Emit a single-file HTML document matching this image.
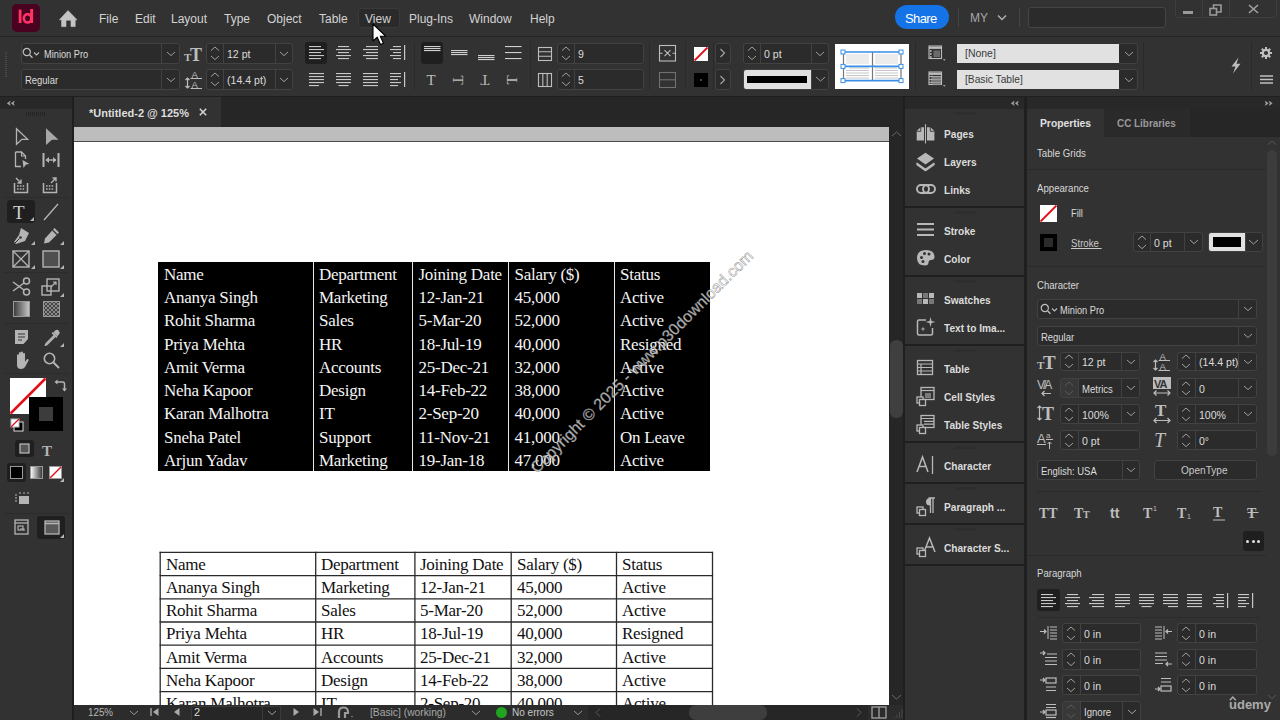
<!DOCTYPE html>
<html><head><meta charset="utf-8"><style>
html,body{margin:0;padding:0;width:1280px;height:720px;overflow:hidden;background:#323232}
.a{position:absolute;box-sizing:border-box}
svg.a{overflow:visible}
.t{position:absolute;white-space:nowrap;line-height:1;font-family:"Liberation Sans",sans-serif}
</style></head><body>
<div class="a" style="left:0px;top:0px;width:1280px;height:720px;background:#323232"></div>
<div class="a" style="left:0px;top:36px;width:1280px;height:1px;background:#262626"></div>
<div class="a" style="left:0px;top:96px;width:1280px;height:1px;background:#1f1f1f"></div>
<div class="a" style="left:12px;top:4px;width:28px;height:28px;background:#49021f;border-radius:5px"></div>
<svg class="a" style="left:12px;top:4px;" width="28" height="28" viewBox="0 0 28 28"><rect x="6.7" y="5.6" width="2.8" height="13.4" fill="#ff3366"/><rect x="18.2" y="5" width="2.9" height="14" fill="#ff3366"/><ellipse cx="15.6" cy="14.3" rx="3.8" ry="4.2" stroke="#ff3366" stroke-width="2.6" fill="none"/></svg>
<svg class="a" style="left:59px;top:10px;" width="19" height="18" viewBox="0 0 19 18"><path d="M9 0.6 L18 9.8 L16.2 9.8 L16.2 16.6 L12 16.6 L12 10.3 L7 10.3 L7 16.6 L2.6 16.6 L2.6 9.8 L0.4 9.8 Z" fill="#c4c4c4" stroke="#c4c4c4" stroke-width="0.6" stroke-linejoin="round"/></svg>
<div class="a" style="left:357.5px;top:8px;width:42.5px;height:20px;background:#2a2a2a;border:1px solid #3a3a3a;border-radius:3px;box-sizing:border-box"></div>
<div class="t" style="left:99px;top:12.84px;font-size:12px;color:#d2d2d2;font-weight:normal;font-family:'Liberation Sans', sans-serif;">File</div>
<div class="t" style="left:135px;top:12.84px;font-size:12px;color:#d2d2d2;font-weight:normal;font-family:'Liberation Sans', sans-serif;">Edit</div>
<div class="t" style="left:171px;top:12.84px;font-size:12px;color:#d2d2d2;font-weight:normal;font-family:'Liberation Sans', sans-serif;">Layout</div>
<div class="t" style="left:224px;top:12.84px;font-size:12px;color:#d2d2d2;font-weight:normal;font-family:'Liberation Sans', sans-serif;">Type</div>
<div class="t" style="left:267px;top:12.84px;font-size:12px;color:#d2d2d2;font-weight:normal;font-family:'Liberation Sans', sans-serif;">Object</div>
<div class="t" style="left:319px;top:12.84px;font-size:12px;color:#d2d2d2;font-weight:normal;font-family:'Liberation Sans', sans-serif;">Table</div>
<div class="t" style="left:365px;top:12.84px;font-size:12px;color:#d2d2d2;font-weight:normal;font-family:'Liberation Sans', sans-serif;">View</div>
<div class="t" style="left:409px;top:12.84px;font-size:12px;color:#d2d2d2;font-weight:normal;font-family:'Liberation Sans', sans-serif;">Plug-Ins</div>
<div class="t" style="left:469px;top:12.84px;font-size:12px;color:#d2d2d2;font-weight:normal;font-family:'Liberation Sans', sans-serif;">Window</div>
<div class="t" style="left:530px;top:12.84px;font-size:12px;color:#d2d2d2;font-weight:normal;font-family:'Liberation Sans', sans-serif;">Help</div>
<div class="a" style="left:895px;top:5px;width:54px;height:24px;background:#1473e6;border-radius:12px"></div>
<div class="t" style="left:905px;top:11.50px;font-size:13px;color:#ffffff;font-weight:normal;font-family:'Liberation Sans', sans-serif;letter-spacing:-0.6px">Share</div>
<div class="a" style="left:958px;top:8px;width:1px;height:19px;background:#444"></div>
<div class="t" style="left:970px;top:11.84px;font-size:12px;color:#a8a8a8;font-weight:normal;font-family:'Liberation Sans', sans-serif;">MY</div>
<svg class="a" style="left:997px;top:14px;" width="10" height="7" viewBox="0 0 10 7"><path d="M1 1.5 L5 5.5 L9 1.5" stroke="#b0b0b0" stroke-width="1.5" fill="none"/></svg>
<div class="a" style="left:1019px;top:8px;width:1px;height:19px;background:#444"></div>
<div class="a" style="left:1028px;top:7px;width:138px;height:21px;background:#2b2b2b;border:1px solid #454545;border-radius:3px;box-sizing:border-box"></div>
<div class="a" style="left:1175px;top:-3px;width:102px;height:21px;border:1px solid #3e3e3e;border-radius:3px;box-sizing:border-box"></div>
<div class="a" style="left:1202px;top:0px;width:1px;height:18px;background:#3e3e3e"></div>
<div class="a" style="left:1229px;top:0px;width:1px;height:18px;background:#3e3e3e"></div>
<div class="a" style="left:1183px;top:11px;width:10px;height:2.5px;background:#9a9a9a"></div>
<svg class="a" style="left:1209px;top:4px;" width="14" height="12" viewBox="0 0 14 12"><rect x="1" y="4.5" width="6.5" height="6.5" stroke="#9a9a9a" stroke-width="1.6" fill="none"/><path d="M4.5 4.5 V1 H12 V8 H7.5" stroke="#9a9a9a" stroke-width="1.6" fill="none"/></svg>
<svg class="a" style="left:1248px;top:4px;" width="11" height="10" viewBox="0 0 11 10"><path d="M1 1 L10 9 M10 1 L1 9" stroke="#a0a0a0" stroke-width="1.6"/></svg>
<div class="a" style="left:5px;top:52px;width:2px;height:1px;background:#4a4a4a"></div>
<div class="a" style="left:5px;top:54px;width:2px;height:1px;background:#4a4a4a"></div>
<div class="a" style="left:5px;top:56px;width:2px;height:1px;background:#4a4a4a"></div>
<div class="a" style="left:5px;top:58px;width:2px;height:1px;background:#4a4a4a"></div>
<div class="a" style="left:5px;top:60px;width:2px;height:1px;background:#4a4a4a"></div>
<div class="a" style="left:5px;top:62px;width:2px;height:1px;background:#4a4a4a"></div>
<div class="a" style="left:5px;top:64px;width:2px;height:1px;background:#4a4a4a"></div>
<div class="a" style="left:5px;top:66px;width:2px;height:1px;background:#4a4a4a"></div>
<div class="a" style="left:5px;top:68px;width:2px;height:1px;background:#4a4a4a"></div>
<div class="a" style="left:5px;top:70px;width:2px;height:1px;background:#4a4a4a"></div>
<div class="a" style="left:5px;top:72px;width:2px;height:1px;background:#4a4a4a"></div>
<div class="a" style="left:5px;top:74px;width:2px;height:1px;background:#4a4a4a"></div>
<div class="a" style="left:5px;top:76px;width:2px;height:1px;background:#4a4a4a"></div>
<div class="a" style="left:21px;top:43px;width:159px;height:21px;background:#2b2b2b;border:1px solid #424242;border-radius:3px;box-sizing:border-box"></div>
<div class="a" style="left:161px;top:44px;width:1px;height:19px;background:#424242"></div>
<svg class="a" style="left:165.5px;top:50.7px;" width="10" height="5.6" viewBox="0 0 10 5.6"><path d="M1 1 L5.0 4.6 L9 1" stroke="#a0a0a0" stroke-width="1.0" fill="none"/></svg>
<svg class="a" style="left:22px;top:47px;" width="24" height="14" viewBox="0 0 24 14"><circle cx="4.8" cy="5" r="3.6" stroke="#bdbdbd" stroke-width="1.2" fill="none"/><path d="M7.5 7.7 L10.5 10.8" stroke="#bdbdbd" stroke-width="1.3"/><path d="M12 5.5 L14.5 8 L17 5.5" stroke="#bdbdbd" stroke-width="1.1" fill="none"/></svg>
<div class="t" style="left:44px;top:48.69px;font-size:11px;color:#dcdcdc;font-weight:normal;font-family:'Liberation Sans', sans-serif;transform:scaleX(0.84);transform-origin:0 0;">Minion Pro</div>
<div class="a" style="left:21px;top:69px;width:159px;height:21px;background:#2b2b2b;border:1px solid #424242;border-radius:3px;box-sizing:border-box"></div>
<div class="a" style="left:161px;top:70px;width:1px;height:19px;background:#424242"></div>
<svg class="a" style="left:165.5px;top:76.7px;" width="10" height="5.6" viewBox="0 0 10 5.6"><path d="M1 1 L5.0 4.6 L9 1" stroke="#a0a0a0" stroke-width="1.0" fill="none"/></svg>
<div class="t" style="left:25px;top:75.49px;font-size:11px;color:#dcdcdc;font-weight:normal;font-family:'Liberation Sans', sans-serif;transform:scaleX(0.86);transform-origin:0 0;">Regular</div>
<svg class="a" style="left:184px;top:46px;" width="20" height="16" viewBox="0 0 20 16"><text x="0" y="15" font-family="Liberation Serif" font-weight="bold" font-size="11" fill="#bdbdbd">T</text><text x="6" y="15" font-family="Liberation Serif" font-weight="bold" font-size="18" fill="#bdbdbd">T</text></svg>
<div class="a" style="left:206px;top:43px;width:87px;height:21px;background:#2b2b2b;border:1px solid #424242;border-radius:3px;box-sizing:border-box"></div>
<div class="a" style="left:223px;top:44px;width:1px;height:19px;background:#424242"></div>
<svg class="a" style="left:209.5px;top:46.2px;" width="10" height="5.6" viewBox="0 0 10 5.6"><path d="M1 4.6 L5.0 1 L9 4.6" stroke="#a0a0a0" stroke-width="1.0" fill="none"/></svg>
<svg class="a" style="left:209.5px;top:55.2px;" width="10" height="5.6" viewBox="0 0 10 5.6"><path d="M1 1 L5.0 4.6 L9 1" stroke="#a0a0a0" stroke-width="1.0" fill="none"/></svg>
<div class="a" style="left:275px;top:44px;width:1px;height:19px;background:#424242"></div>
<svg class="a" style="left:279.0px;top:50.7px;" width="10" height="5.6" viewBox="0 0 10 5.6"><path d="M1 1 L5.0 4.6 L9 1" stroke="#a0a0a0" stroke-width="1.0" fill="none"/></svg>
<div class="t" style="left:227px;top:49.49px;font-size:11px;color:#dcdcdc;font-weight:normal;font-family:'Liberation Sans', sans-serif;transform:scaleX(0.96);transform-origin:0 0;">12 pt</div>
<svg class="a" style="left:185px;top:69px;" width="20" height="20" viewBox="0 0 20 20"><path d="M2.5 9 V19 M0.5 11 L2.5 9 L4.5 11 M0.5 17 L2.5 19 L4.5 17" stroke="#bdbdbd" stroke-width="1.2" fill="none"/><text x="6.5" y="9" font-family="Liberation Sans" font-size="9.5" fill="#bdbdbd">A</text><text x="6.5" y="19" font-family="Liberation Sans" font-size="9.5" fill="#bdbdbd">A</text><path d="M5.5 9.5 H17 M5.5 19.5 H17" stroke="#bdbdbd" stroke-width="1"/></svg>
<div class="a" style="left:206px;top:69px;width:87px;height:21px;background:#2b2b2b;border:1px solid #424242;border-radius:3px;box-sizing:border-box"></div>
<div class="a" style="left:223px;top:70px;width:1px;height:19px;background:#424242"></div>
<svg class="a" style="left:209.5px;top:72.2px;" width="10" height="5.6" viewBox="0 0 10 5.6"><path d="M1 4.6 L5.0 1 L9 4.6" stroke="#a0a0a0" stroke-width="1.0" fill="none"/></svg>
<svg class="a" style="left:209.5px;top:81.2px;" width="10" height="5.6" viewBox="0 0 10 5.6"><path d="M1 1 L5.0 4.6 L9 1" stroke="#a0a0a0" stroke-width="1.0" fill="none"/></svg>
<div class="a" style="left:275px;top:70px;width:1px;height:19px;background:#424242"></div>
<svg class="a" style="left:279.0px;top:76.7px;" width="10" height="5.6" viewBox="0 0 10 5.6"><path d="M1 1 L5.0 4.6 L9 1" stroke="#a0a0a0" stroke-width="1.0" fill="none"/></svg>
<div class="t" style="left:227px;top:75.49px;font-size:11px;color:#dcdcdc;font-weight:normal;font-family:'Liberation Sans', sans-serif;transform:scaleX(0.96);transform-origin:0 0;">(14.4 pt)</div>
<div class="a" style="left:305px;top:42px;width:22px;height:22px;background:#1f1f1f;border-radius:3px"></div>
<svg class="a" style="left:309px;top:46px;" width="16" height="15" viewBox="0 0 16 15"><g><rect x="0" y="0" width="12" height="1.1" fill="#c8c8c8"/><rect x="0" y="3" width="15" height="1.1" fill="#c8c8c8"/><rect x="0" y="6" width="12" height="1.1" fill="#c8c8c8"/><rect x="0" y="9" width="15" height="1.1" fill="#c8c8c8"/><rect x="0" y="12" width="12" height="1.1" fill="#c8c8c8"/></g></svg>
<svg class="a" style="left:336px;top:46px;" width="16" height="15" viewBox="0 0 16 15"><g><rect x="2" y="0" width="11" height="1.1" fill="#c8c8c8"/><rect x="0" y="3" width="15" height="1.1" fill="#c8c8c8"/><rect x="2" y="6" width="11" height="1.1" fill="#c8c8c8"/><rect x="0" y="9" width="15" height="1.1" fill="#c8c8c8"/><rect x="2" y="12" width="11" height="1.1" fill="#c8c8c8"/></g></svg>
<svg class="a" style="left:363px;top:46px;" width="16" height="15" viewBox="0 0 16 15"><g><rect x="3" y="0" width="12" height="1.1" fill="#c8c8c8"/><rect x="0" y="3" width="15" height="1.1" fill="#c8c8c8"/><rect x="3" y="6" width="12" height="1.1" fill="#c8c8c8"/><rect x="0" y="9" width="15" height="1.1" fill="#c8c8c8"/><rect x="3" y="12" width="12" height="1.1" fill="#c8c8c8"/></g></svg>
<svg class="a" style="left:390px;top:46px;" width="16" height="15" viewBox="0 0 16 15"><g><rect x="3" y="0" width="8" height="1.1" fill="#c8c8c8"/><rect x="0" y="3" width="11" height="1.1" fill="#c8c8c8"/><rect x="3" y="6" width="8" height="1.1" fill="#c8c8c8"/><rect x="0" y="9" width="11" height="1.1" fill="#c8c8c8"/><rect x="3" y="12" width="8" height="1.1" fill="#c8c8c8"/><rect x="14" y="-1" width="1.2" height="15" fill="#c8c8c8"/></g></svg>
<svg class="a" style="left:309px;top:73px;" width="16" height="15" viewBox="0 0 16 15"><g><rect x="0" y="0" width="15" height="1.1" fill="#c8c8c8"/><rect x="0" y="3" width="15" height="1.1" fill="#c8c8c8"/><rect x="0" y="6" width="15" height="1.1" fill="#c8c8c8"/><rect x="0" y="9" width="15" height="1.1" fill="#c8c8c8"/><rect x="0" y="12" width="10" height="1.1" fill="#c8c8c8"/></g></svg>
<svg class="a" style="left:336px;top:73px;" width="16" height="15" viewBox="0 0 16 15"><g><rect x="0" y="0" width="15" height="1.1" fill="#c8c8c8"/><rect x="0" y="3" width="15" height="1.1" fill="#c8c8c8"/><rect x="0" y="6" width="15" height="1.1" fill="#c8c8c8"/><rect x="0" y="9" width="15" height="1.1" fill="#c8c8c8"/><rect x="2.5" y="12" width="10.0" height="1.1" fill="#c8c8c8"/></g></svg>
<svg class="a" style="left:363px;top:73px;" width="16" height="15" viewBox="0 0 16 15"><g><rect x="0" y="0" width="15" height="1.1" fill="#c8c8c8"/><rect x="0" y="3" width="15" height="1.1" fill="#c8c8c8"/><rect x="0" y="6" width="15" height="1.1" fill="#c8c8c8"/><rect x="0" y="9" width="15" height="1.1" fill="#c8c8c8"/><rect x="0" y="12" width="15" height="1.1" fill="#c8c8c8"/></g></svg>
<svg class="a" style="left:390px;top:73px;" width="16" height="15" viewBox="0 0 16 15"><g><rect x="0" y="0" width="11" height="1.1" fill="#c8c8c8"/><rect x="0" y="3" width="11" height="1.1" fill="#c8c8c8"/><rect x="0" y="6" width="8" height="1.1" fill="#c8c8c8"/><rect x="0" y="9" width="11" height="1.1" fill="#c8c8c8"/><rect x="0" y="12" width="8" height="1.1" fill="#c8c8c8"/><rect x="14" y="-1" width="1.2" height="15" fill="#c8c8c8"/></g></svg>
<div class="a" style="left:414px;top:42px;width:1px;height:48px;background:#2a2a2a"></div>
<div class="a" style="left:421px;top:42px;width:22px;height:22px;background:#1f1f1f;border-radius:3px"></div>
<svg class="a" style="left:424px;top:46px;" width="17" height="6" viewBox="0 0 17 6"><rect x="0" y="0" width="16.5" height="1.1" fill="#d0d0d0"/><rect x="0" y="2" width="16.5" height="1.1" fill="#d0d0d0"/><rect x="0" y="4" width="16.5" height="1.1" fill="#d0d0d0"/></svg>
<svg class="a" style="left:451px;top:50px;" width="17" height="6" viewBox="0 0 17 6"><rect x="0" y="0" width="16.5" height="1.1" fill="#d0d0d0"/><rect x="0" y="2" width="16.5" height="1.1" fill="#d0d0d0"/><rect x="0" y="4" width="16.5" height="1.1" fill="#d0d0d0"/></svg>
<svg class="a" style="left:478px;top:55px;" width="17" height="6" viewBox="0 0 17 6"><rect x="0" y="0" width="16.5" height="1.1" fill="#d0d0d0"/><rect x="0" y="2" width="16.5" height="1.1" fill="#d0d0d0"/><rect x="0" y="4" width="16.5" height="1.1" fill="#d0d0d0"/></svg>
<svg class="a" style="left:505px;top:46px;" width="17" height="14" viewBox="0 0 17 14"><rect x="0" y="0" width="16.5" height="1.1" fill="#d0d0d0"/><rect x="0" y="6" width="16.5" height="1.1" fill="#d0d0d0"/><rect x="0" y="12" width="16.5" height="1.1" fill="#d0d0d0"/></svg>
<svg class="a" style="left:424px;top:73px;" width="14" height="14" viewBox="0 0 14 14"><text x="7" y="11.8" text-anchor="middle" font-family="Liberation Serif" font-size="15" fill="#bdbdbd">T</text></svg>
<svg class="a" style="left:451px;top:73px;" width="14" height="14" viewBox="0 0 14 14"><g transform="rotate(90 7 7)"><text x="7" y="11.8" text-anchor="middle" font-family="Liberation Serif" font-size="15" fill="#bdbdbd">T</text></g></svg>
<svg class="a" style="left:478px;top:73px;" width="14" height="14" viewBox="0 0 14 14"><g transform="rotate(180 7 7)"><text x="7" y="11.8" text-anchor="middle" font-family="Liberation Serif" font-size="15" fill="#bdbdbd">T</text></g></svg>
<svg class="a" style="left:505px;top:73px;" width="14" height="14" viewBox="0 0 14 14"><g transform="rotate(270 7 7)"><text x="7" y="11.8" text-anchor="middle" font-family="Liberation Serif" font-size="15" fill="#bdbdbd">T</text></g></svg>
<div class="a" style="left:530px;top:42px;width:1px;height:48px;background:#2a2a2a"></div>
<svg class="a" style="left:537px;top:46px;" width="16" height="15" viewBox="0 0 16 15"><rect x="1.5" y="1.5" width="13" height="13" stroke="#bdbdbd" stroke-width="1.1" fill="none"/><path d="M1.5 5.8 H14.5 M1.5 10.2 H14.5" stroke="#bdbdbd" stroke-width="1.1"/></svg>
<div class="a" style="left:557px;top:43px;width:87px;height:21px;background:#2b2b2b;border:1px solid #424242;border-radius:3px;box-sizing:border-box"></div>
<div class="a" style="left:574px;top:44px;width:1px;height:19px;background:#424242"></div>
<svg class="a" style="left:560.5px;top:46.2px;" width="10" height="5.6" viewBox="0 0 10 5.6"><path d="M1 4.6 L5.0 1 L9 4.6" stroke="#a0a0a0" stroke-width="1.0" fill="none"/></svg>
<svg class="a" style="left:560.5px;top:55.2px;" width="10" height="5.6" viewBox="0 0 10 5.6"><path d="M1 1 L5.0 4.6 L9 1" stroke="#a0a0a0" stroke-width="1.0" fill="none"/></svg>
<div class="t" style="left:578px;top:49.49px;font-size:11px;color:#dcdcdc;font-weight:normal;font-family:'Liberation Sans', sans-serif;transform:scaleX(0.96);transform-origin:0 0;">9</div>
<svg class="a" style="left:537px;top:72px;" width="16" height="15" viewBox="0 0 16 15"><rect x="1.5" y="1.5" width="13" height="13" stroke="#bdbdbd" stroke-width="1.1" fill="none"/><path d="M5.8 1.5 V14.5 M10.2 1.5 V14.5" stroke="#bdbdbd" stroke-width="1.1"/></svg>
<div class="a" style="left:557px;top:69px;width:87px;height:21px;background:#2b2b2b;border:1px solid #424242;border-radius:3px;box-sizing:border-box"></div>
<div class="a" style="left:574px;top:70px;width:1px;height:19px;background:#424242"></div>
<svg class="a" style="left:560.5px;top:72.2px;" width="10" height="5.6" viewBox="0 0 10 5.6"><path d="M1 4.6 L5.0 1 L9 4.6" stroke="#a0a0a0" stroke-width="1.0" fill="none"/></svg>
<svg class="a" style="left:560.5px;top:81.2px;" width="10" height="5.6" viewBox="0 0 10 5.6"><path d="M1 1 L5.0 4.6 L9 1" stroke="#a0a0a0" stroke-width="1.0" fill="none"/></svg>
<div class="t" style="left:578px;top:75.49px;font-size:11px;color:#dcdcdc;font-weight:normal;font-family:'Liberation Sans', sans-serif;transform:scaleX(0.96);transform-origin:0 0;">5</div>
<div class="a" style="left:649px;top:42px;width:1px;height:48px;background:#2a2a2a"></div>
<svg class="a" style="left:658px;top:44px;" width="18" height="18" viewBox="0 0 18 18"><rect x="1.5" y="1.5" width="16" height="15.5" stroke="#bdbdbd" stroke-width="1.1" fill="none"/><path d="M1.5 9.2 H4.5 M14.5 9.2 H17.5 M6.5 6.2 L12.5 12.2 M12.5 6.2 L6.5 12.2" stroke="#bdbdbd" stroke-width="1.1"/></svg>
<svg class="a" style="left:658px;top:71px;" width="18" height="18" viewBox="0 0 18 18"><rect x="1.5" y="1.5" width="16" height="15" stroke="#707070" stroke-width="1.1" fill="none"/><path d="M1.5 8.8 H17.5" stroke="#707070" stroke-width="1.1"/></svg>
<div class="a" style="left:685px;top:42px;width:1px;height:48px;background:#2a2a2a"></div>
<svg class="a" style="left:694px;top:46.5px;" width="14" height="14" viewBox="0 0 14 14"><rect width="14" height="14" fill="#ffffff"/><path d="M0.5 13.5 L13.5 0.5" stroke="#e0101a" stroke-width="1.8"/></svg>
<div class="a" style="left:694px;top:72.5px;width:14px;height:14px;background:#000"></div>
<div class="a" style="left:700px;top:78.5px;width:2px;height:2px;background:#444"></div>
<div class="a" style="left:712.5px;top:43px;width:1px;height:47px;background:#2a2a2a"></div>
<div class="a" style="left:715px;top:43px;width:16px;height:21px;background:#2b2b2b;border:1px solid #424242;border-radius:3px;box-sizing:border-box"></div>
<svg class="a" style="left:719px;top:48px;" width="8" height="10" viewBox="0 0 8 10"><path d="M1.5 1 L5.5 5 L1.5 9" stroke="#a8a8a8" stroke-width="1.1" fill="none"/></svg>
<div class="a" style="left:715px;top:69px;width:16px;height:21px;background:#2b2b2b;border:1px solid #424242;border-radius:3px;box-sizing:border-box"></div>
<svg class="a" style="left:719px;top:74.5px;" width="8" height="10" viewBox="0 0 8 10"><path d="M1.5 1 L5.5 5 L1.5 9" stroke="#a8a8a8" stroke-width="1.1" fill="none"/></svg>
<div class="a" style="left:743px;top:43px;width:86px;height:21px;background:#2b2b2b;border:1px solid #424242;border-radius:3px;box-sizing:border-box"></div>
<div class="a" style="left:760px;top:44px;width:1px;height:19px;background:#424242"></div>
<svg class="a" style="left:746.5px;top:46.2px;" width="10" height="5.6" viewBox="0 0 10 5.6"><path d="M1 4.6 L5.0 1 L9 4.6" stroke="#a0a0a0" stroke-width="1.0" fill="none"/></svg>
<svg class="a" style="left:746.5px;top:55.2px;" width="10" height="5.6" viewBox="0 0 10 5.6"><path d="M1 1 L5.0 4.6 L9 1" stroke="#a0a0a0" stroke-width="1.0" fill="none"/></svg>
<div class="a" style="left:811px;top:44px;width:1px;height:19px;background:#424242"></div>
<svg class="a" style="left:815.0px;top:50.7px;" width="10" height="5.6" viewBox="0 0 10 5.6"><path d="M1 1 L5.0 4.6 L9 1" stroke="#a0a0a0" stroke-width="1.0" fill="none"/></svg>
<div class="t" style="left:764px;top:49.49px;font-size:11px;color:#dcdcdc;font-weight:normal;font-family:'Liberation Sans', sans-serif;transform:scaleX(0.96);transform-origin:0 0;">0 pt</div>
<div class="a" style="left:743px;top:69px;width:86px;height:21px;background:#2b2b2b;border:1px solid #424242;border-radius:3px;box-sizing:border-box"></div>
<div class="a" style="left:744px;top:70px;width:67px;height:19px;background:#e1e1e1;border-radius:2px 0 0 2px"></div>
<div class="a" style="left:747px;top:76px;width:60px;height:7px;background:#000"></div>
<div class="a" style="left:811px;top:70px;width:1px;height:19px;background:#424242"></div>
<svg class="a" style="left:814.5px;top:76.475px;" width="11" height="6.05" viewBox="0 0 11 6.05"><path d="M1 1 L5.5 5.05 L10 1" stroke="#a0a0a0" stroke-width="1.0" fill="none"/></svg>
<div class="a" style="left:835px;top:44px;width:74px;height:45px;background:#ffffff"></div>
<svg class="a" style="left:835px;top:44px;" width="74" height="45" viewBox="0 0 74 45"><rect x="11" y="10" width="23" height="10" fill="#ececec"/><rect x="40" y="10" width="23" height="10" fill="#ececec"/>
<path d="M14 24 H34 M40 24 H62 M11 26.5 H34 M40 26.5 H63 M11 29 H34 M40 29 H63 M11 31.5 H34 M40 31.5 H63 M11 34 H34 M40 34 H63" stroke="#b8b8b8" stroke-width="0.8"/>
<path d="M8.5 8 V37 M37.5 8 V37 M66 8 V37" stroke="#777" stroke-width="1.2"/>
<path d="M8 8 H66 M8 22.4 H66 M8 36.6 H66" stroke="#3a8ee6" stroke-width="1.6"/>
<g fill="#ffffff" stroke="#3a8ee6" stroke-width="1"><rect x="6" y="6" width="4" height="4"/><rect x="64" y="6" width="4" height="4"/><rect x="6" y="20.4" width="4" height="4"/><rect x="64" y="20.4" width="4" height="4"/><rect x="6" y="34.6" width="4" height="4"/><rect x="64" y="34.6" width="4" height="4"/></g></svg>
<div class="a" style="left:915px;top:42px;width:1px;height:48px;background:#2a2a2a"></div>
<svg class="a" style="left:927.5px;top:45px;" width="19" height="17" viewBox="0 0 19 17"><rect x="1" y="1" width="12.5" height="12.5" stroke="#bdbdbd" stroke-width="1.1" fill="none"/><path d="M1 2.8 H13.5" stroke="#bdbdbd" stroke-width="2.2"/><circle cx="2.8" cy="6" r="0.9" fill="#bdbdbd"/><circle cx="2.8" cy="9" r="0.9" fill="#bdbdbd"/><circle cx="2.8" cy="12" r="0.9" fill="#bdbdbd"/><rect x="5.5" y="5.5" width="6.5" height="6.5" fill="#6a6a6a"/><path d="M15 14.2 L17.6 14.2 L16.3 15.8 Z" fill="#bdbdbd"/></svg>
<svg class="a" style="left:927.5px;top:71px;" width="19" height="17" viewBox="0 0 19 17"><rect x="1" y="1" width="12.5" height="12.5" stroke="#bdbdbd" stroke-width="1.1" fill="none"/><path d="M1 2.8 H13.5" stroke="#bdbdbd" stroke-width="2.2"/><path d="M1 5.6 H13.5 M1 8.6 H13.5 M1 11.4 H13.5 M4 4.5 V13.5" stroke="#bdbdbd" stroke-width="0.9"/><rect x="4.5" y="6" width="8.5" height="2.2" fill="#7a7a7a"/><rect x="4.5" y="9" width="8.5" height="2.2" fill="#7a7a7a"/><rect x="4.5" y="12" width="8.5" height="1.5" fill="#7a7a7a"/><path d="M15 14.2 L17.6 14.2 L16.3 15.8 Z" fill="#bdbdbd"/></svg>
<div class="a" style="left:1118px;top:43px;width:20px;height:21px;background:#2b2b2b;border:1px solid #424242;border-radius:3px;box-sizing:border-box"></div>
<div class="a" style="left:957px;top:44px;width:162px;height:19px;background:#e1e1e1"></div>
<svg class="a" style="left:1123.5px;top:50.7px;" width="10" height="5.6" viewBox="0 0 10 5.6"><path d="M1 1 L5.0 4.6 L9 1" stroke="#a0a0a0" stroke-width="1.0" fill="none"/></svg>
<div class="t" style="left:965px;top:48.19px;font-size:11px;color:#3a3a3a;font-weight:normal;font-family:'Liberation Sans', sans-serif;transform:scaleX(0.95);transform-origin:0 0;">[None]</div>
<div class="a" style="left:1118px;top:69px;width:20px;height:21px;background:#2b2b2b;border:1px solid #424242;border-radius:3px;box-sizing:border-box"></div>
<div class="a" style="left:957px;top:70px;width:162px;height:19px;background:#e1e1e1"></div>
<svg class="a" style="left:1123.5px;top:76.7px;" width="10" height="5.6" viewBox="0 0 10 5.6"><path d="M1 1 L5.0 4.6 L9 1" stroke="#a0a0a0" stroke-width="1.0" fill="none"/></svg>
<div class="t" style="left:965px;top:74.19px;font-size:11px;color:#3a3a3a;font-weight:normal;font-family:'Liberation Sans', sans-serif;transform:scaleX(0.93);transform-origin:0 0;">[Basic Table]</div>
<div class="a" style="left:1143px;top:42px;width:1px;height:48px;background:#2a2a2a"></div>
<svg class="a" style="left:1230px;top:57px;" width="12" height="17" viewBox="0 0 12 17"><path d="M8.5 0.5 L1.5 9.5 L5.5 9.5 L3 16.5 L10.5 6.8 L6.5 6.8 Z" fill="#bdbdbd"/></svg>
<div class="a" style="left:1251px;top:42px;width:1px;height:48px;background:#2a2a2a"></div>
<svg class="a" style="left:1260px;top:47px;" width="12" height="12" viewBox="0 0 12 12"><circle cx="6" cy="6" r="3.2" stroke="#c0c0c0" stroke-width="2.2" fill="none"/><g stroke="#c0c0c0" stroke-width="2"><path d="M6 0 V2.5 M6 9.5 V12 M0 6 H2.5 M9.5 6 H12 M1.8 1.8 L3.5 3.5 M8.5 8.5 L10.2 10.2 M1.8 10.2 L3.5 8.5 M8.5 3.5 L10.2 1.8"/></g></svg>
<svg class="a" style="left:1260px;top:75px;" width="13" height="9" viewBox="0 0 13 9"><path d="M0 1 H13 M0 4.5 H13 M0 8 H13" stroke="#c0c0c0" stroke-width="1.3"/></svg>
<div class="a" style="left:0px;top:97px;width:73px;height:12px;background:#282828"></div>
<svg class="a" style="left:6.5px;top:100.5px;" width="8" height="5" viewBox="0 0 8 5"><path d="M3.2 0.3 L0.3 2.3 L3.2 4.3 L2.4 2.3 Z M7.2 0.3 L4.3 2.3 L7.2 4.3 L6.4 2.3 Z" fill="#a8a8a8" stroke="#a8a8a8" stroke-width="0.6" stroke-linejoin="round"/></svg>
<div class="a" style="left:72px;top:97px;width:2px;height:623px;background:#1f1f1f"></div>
<div class="a" style="left:26px;top:112px;width:1px;height:4px;background:#262626"></div>
<div class="a" style="left:28px;top:112px;width:1px;height:4px;background:#262626"></div>
<div class="a" style="left:30px;top:112px;width:1px;height:4px;background:#262626"></div>
<div class="a" style="left:32px;top:112px;width:1px;height:4px;background:#262626"></div>
<div class="a" style="left:34px;top:112px;width:1px;height:4px;background:#262626"></div>
<div class="a" style="left:36px;top:112px;width:1px;height:4px;background:#262626"></div>
<div class="a" style="left:38px;top:112px;width:1px;height:4px;background:#262626"></div>
<div class="a" style="left:40px;top:112px;width:1px;height:4px;background:#262626"></div>
<div class="a" style="left:42px;top:112px;width:1px;height:4px;background:#262626"></div>
<div class="a" style="left:44px;top:112px;width:1px;height:4px;background:#262626"></div>
<svg class="a" style="left:15px;top:127px;" width="15" height="19" viewBox="0 0 15 19"><path d="M1.5 1.8 L12.6 12.3 L6.9 12.3 L1.5 17.3 Z" stroke="#b4b4b4" stroke-width="1.3" fill="none" stroke-linejoin="miter"/></svg>
<svg class="a" style="left:45px;top:127px;" width="15" height="19" viewBox="0 0 15 19"><path d="M1 1.2 L13.5 12.8 L7 12.8 L1 18 Z" fill="#a8a8a8"/></svg>
<svg class="a" style="left:14px;top:151px;" width="16" height="18" viewBox="0 0 16 18"><path d="M1.5 1 H7.5 L11.5 5 V8 M1.5 1 V15.5 H7" stroke="#b4b4b4" stroke-width="1.3" fill="none"/><path d="M7.5 1 V5 H11.5" stroke="#b4b4b4" stroke-width="1.1" fill="none"/><path d="M8.5 9 L15.5 13 L12 13.5 L9.5 17 Z" fill="#b4b4b4"/></svg>
<svg class="a" style="left:41px;top:152px;" width="20" height="16" viewBox="0 0 20 16"><path d="M2.5 1 V15 M17.5 1 V15" stroke="#b4b4b4" stroke-width="2"/><path d="M5 8 H15" stroke="#b4b4b4" stroke-width="1.4"/><path d="M4.5 8 L8 5 V11 Z M15.5 8 L12 5 V11 Z" fill="#b4b4b4"/></svg>
<svg class="a" style="left:13px;top:176px;" width="16" height="18" viewBox="0 0 16 18"><path d="M1.5 7 V16.5 H14.5 V7" stroke="#b4b4b4" stroke-width="1.5" fill="none"/><path d="M3 2 L8 7 M8 3.5 V7 H4.5" stroke="#b4b4b4" stroke-width="1.4" fill="none"/><path d="M4 10 H12 M4 13 H12" stroke="#b4b4b4" stroke-width="1.6" stroke-dasharray="1.6 1.2"/></svg>
<svg class="a" style="left:42px;top:176px;" width="17" height="18" viewBox="0 0 17 18"><path d="M1.5 7 V16.5 H14.5 V7" stroke="#b4b4b4" stroke-width="1.5" fill="none"/><path d="M9 7 L14 2 M10.5 2 H14 V5.5" stroke="#b4b4b4" stroke-width="1.4" fill="none"/><path d="M4 10 H12 M4 13 H12" stroke="#b4b4b4" stroke-width="1.6" stroke-dasharray="1.6 1.2"/></svg>
<div class="a" style="left:4px;top:197px;width:65px;height:1px;background:#2c2c2c"></div>
<div class="a" style="left:7px;top:200px;width:28px;height:23px;background:#1f1f1f;border-radius:3px"></div>
<svg class="a" style="left:13px;top:203px;" width="16" height="17" viewBox="0 0 16 17"><text x="0" y="15.5" font-family="Liberation Serif" font-size="19" fill="#d0d0d0">T</text></svg>
<svg class="a" style="left:30px;top:217px;" width="4" height="4" viewBox="0 0 4 4"><path d="M4 0 V4 H0 Z" fill="#b4b4b4"/></svg>
<svg class="a" style="left:43px;top:203px;" width="16" height="18" viewBox="0 0 16 18"><path d="M1 17 L15 1" stroke="#b4b4b4" stroke-width="1.4"/></svg>
<svg class="a" style="left:12px;top:226px;" width="20" height="20" viewBox="0 0 20 20"><path d="M9 2 L17 7 L13 15 L4 18 L2 16 L7 9 Z" fill="#b4b4b4"/><path d="M2 18 L7.5 12.5" stroke="#323232" stroke-width="1"/><circle cx="8.5" cy="11.5" r="1.3" fill="#323232"/></svg>
<svg class="a" style="left:31px;top:241px;" width="4" height="4" viewBox="0 0 4 4"><path d="M4 0 V4 H0 Z" fill="#b4b4b4"/></svg>
<svg class="a" style="left:42px;top:226px;" width="19" height="19" viewBox="0 0 19 19"><path d="M12.5 2 L17 6.5 L7 16.5 L2 17.5 L3 12.5 Z" fill="#b4b4b4"/><path d="M10.5 4 L15 8.5" stroke="#323232" stroke-width="1.2"/></svg>
<svg class="a" style="left:60px;top:241px;" width="4" height="4" viewBox="0 0 4 4"><path d="M4 0 V4 H0 Z" fill="#b4b4b4"/></svg>
<svg class="a" style="left:12px;top:250px;" width="18" height="18" viewBox="0 0 18 18"><rect x="1" y="1" width="16" height="16" stroke="#b4b4b4" stroke-width="1.4" fill="none"/><path d="M1 1 L17 17 M17 1 L1 17" stroke="#b4b4b4" stroke-width="1.3"/></svg>
<svg class="a" style="left:31px;top:265px;" width="4" height="4" viewBox="0 0 4 4"><path d="M4 0 V4 H0 Z" fill="#b4b4b4"/></svg>
<svg class="a" style="left:42px;top:250px;" width="18" height="18" viewBox="0 0 18 18"><rect x="1" y="1" width="16" height="16" stroke="#b4b4b4" stroke-width="1.4" fill="#4f4f4f"/></svg>
<svg class="a" style="left:60px;top:265px;" width="4" height="4" viewBox="0 0 4 4"><path d="M4 0 V4 H0 Z" fill="#b4b4b4"/></svg>
<div class="a" style="left:4px;top:272px;width:65px;height:1px;background:#2c2c2c"></div>
<svg class="a" style="left:12px;top:277px;" width="19" height="19" viewBox="0 0 19 19"><circle cx="14.5" cy="4" r="3" stroke="#b4b4b4" stroke-width="1.5" fill="none"/><circle cx="14.5" cy="15" r="3" stroke="#b4b4b4" stroke-width="1.5" fill="none"/><path d="M1 5 L12 13 M1 14 L12 6" stroke="#b4b4b4" stroke-width="1.5"/></svg>
<svg class="a" style="left:41px;top:277px;" width="21" height="20" viewBox="0 0 21 20"><rect x="1" y="9" width="9" height="9" stroke="#b4b4b4" stroke-width="1.4" fill="none"/><rect x="6" y="2" width="12" height="12" stroke="#b4b4b4" stroke-width="1.4" fill="none"/><path d="M10 10 L15 5 M12 5 H15 V8" stroke="#b4b4b4" stroke-width="1.2" fill="none"/></svg>
<svg class="a" style="left:60px;top:293px;" width="4" height="4" viewBox="0 0 4 4"><path d="M4 0 V4 H0 Z" fill="#b4b4b4"/></svg>
<svg class="a" style="left:13px;top:301px;" width="17" height="16" viewBox="0 0 17 16"><defs><linearGradient id="g1" x1="0" x2="1"><stop offset="0" stop-color="#3a3a3a"/><stop offset="1" stop-color="#c8c8c8"/></linearGradient></defs><rect x="0.5" y="0.5" width="16" height="15" fill="url(#g1)" stroke="#9a9a9a" stroke-width="1"/></svg>
<svg class="a" style="left:43px;top:301px;" width="17" height="16" viewBox="0 0 17 16"><defs><pattern id="chk" width="4" height="4" patternUnits="userSpaceOnUse"><rect width="2" height="2" fill="#8a8a8a"/><rect x="2" y="2" width="2" height="2" fill="#8a8a8a"/><rect x="2" width="2" height="2" fill="#444"/><rect y="2" width="2" height="2" fill="#444"/></pattern></defs><rect x="0.5" y="0.5" width="16" height="15" fill="url(#chk)" stroke="#9a9a9a" stroke-width="1"/></svg>
<div class="a" style="left:4px;top:323px;width:65px;height:1px;background:#2c2c2c"></div>
<svg class="a" style="left:14px;top:329px;" width="15" height="16" viewBox="0 0 15 16"><path d="M1 1 H14 V10 L9.5 15 H1 Z" fill="#b4b4b4"/><path d="M4 5 H11 M4 8 H11 M4 11 H8" stroke="#323232" stroke-width="1.2"/></svg>
<svg class="a" style="left:43px;top:329px;" width="18" height="18" viewBox="0 0 18 18"><path d="M12.2 1.6 Q14 0 15.8 1.8 Q17.6 3.6 16 5.4 L14.2 7.2 L10.4 3.4 Z" fill="#b4b4b4"/><path d="M9.2 3.6 L14 8.4" stroke="#b4b4b4" stroke-width="1.6"/><path d="M11.6 6 L3.6 14 Q2.6 15 2.2 16.4 Q3.6 16 4.6 15 L12.6 7" stroke="#b4b4b4" stroke-width="1.3" fill="none" stroke-linejoin="round"/></svg>
<svg class="a" style="left:60px;top:343px;" width="4" height="4" viewBox="0 0 4 4"><path d="M4 0 V4 H0 Z" fill="#b4b4b4"/></svg>
<svg class="a" style="left:12px;top:351px;" width="19" height="19" viewBox="0 0 19 19"><path d="M5 11 V4.5 Q5 3.3 6 3.3 Q7 3.3 7 4.5 V9 V2.3 Q7 1.1 8 1.1 Q9 1.1 9 2.3 V9 V1.6 Q9 0.5 10 0.5 Q11 0.5 11 1.6 V9 V3 Q11 1.9 12 1.9 Q13 1.9 13 3 V11 L14.6 8.6 Q15.4 7.6 16.3 8.2 Q17 8.8 16.4 9.8 L13 16 Q11.8 18 9 18 Q5 18 5 14 Z" fill="#b4b4b4"/></svg>
<svg class="a" style="left:43px;top:352px;" width="17" height="17" viewBox="0 0 17 17"><circle cx="6.5" cy="6.5" r="5.2" stroke="#b4b4b4" stroke-width="1.6" fill="none"/><path d="M10.5 10.5 L16 16" stroke="#b4b4b4" stroke-width="2"/></svg>
<div class="a" style="left:4px;top:373px;width:65px;height:1px;background:#2c2c2c"></div>
<svg class="a" style="left:10px;top:378px;" width="36" height="36" viewBox="0 0 36 36"><rect width="36" height="36" fill="#ffffff"/><path d="M0.5 35.5 L35.5 0.5" stroke="#e0101a" stroke-width="2.5"/></svg>
<div class="a" style="left:29px;top:397px;width:34px;height:34px;background:#000"></div>
<div class="a" style="left:39px;top:407px;width:14px;height:14px;background:#3c3c3c"></div>
<svg class="a" style="left:54px;top:379px;" width="13" height="13" viewBox="0 0 13 13"><path d="M2 3 H8.5 Q10.5 3 10.5 5 V11" stroke="#b4b4b4" stroke-width="1.5" fill="none"/><path d="M0.5 3 L3.5 0.5 V5.5 Z M10.5 12.5 L8 9.5 H13 Z" fill="#b4b4b4"/></svg>
<svg class="a" style="left:10px;top:418px;" width="14" height="14" viewBox="0 0 14 14"><rect x="4" y="4" width="9" height="9" fill="#000" stroke="#ddd" stroke-width="1"/><rect x="1" y="1" width="8" height="8" fill="#fff" stroke="#bbb" stroke-width="1"/><path d="M1 9 L9 1" stroke="#e0101a" stroke-width="1.3"/></svg>
<div class="a" style="left:15px;top:440px;width:19px;height:17px;background:#1f1f1f;border-radius:3px"></div>
<svg class="a" style="left:19px;top:443px;" width="11" height="11" viewBox="0 0 11 11"><rect x="1" y="1" width="9" height="9" stroke="#bdbdbd" stroke-width="1.2" fill="#555"/></svg>
<svg class="a" style="left:42px;top:443px;" width="13" height="14" viewBox="0 0 13 14"><text x="0" y="12.5" font-family="Liberation Serif" font-weight="bold" font-size="15" fill="#b4b4b4">T</text></svg>
<div class="a" style="left:7px;top:463px;width:19px;height:19px;background:#1f1f1f;border-radius:3px"></div>
<svg class="a" style="left:10px;top:466px;" width="13" height="13" viewBox="0 0 13 13"><rect x="0.5" y="0.5" width="12" height="12" fill="#000" stroke="#9a9a9a" stroke-width="1"/></svg>
<svg class="a" style="left:30px;top:466px;" width="13" height="13" viewBox="0 0 13 13"><defs><linearGradient id="g2" x1="0" x2="1"><stop offset="0" stop-color="#ffffff"/><stop offset="1" stop-color="#333"/></linearGradient></defs><rect x="0.5" y="0.5" width="12" height="12" fill="url(#g2)" stroke="#9a9a9a" stroke-width="1"/></svg>
<svg class="a" style="left:49px;top:466px;" width="13" height="13" viewBox="0 0 13 13"><rect x="0.5" y="0.5" width="12" height="12" fill="#fff" stroke="#9a9a9a" stroke-width="1"/><path d="M1 12 L12 1" stroke="#e0101a" stroke-width="1.4"/></svg>
<svg class="a" style="left:60px;top:478px;" width="4" height="4" viewBox="0 0 4 4"><path d="M4 0 V4 H0 Z" fill="#b4b4b4"/></svg>
<svg class="a" style="left:14px;top:491px;" width="16" height="16" viewBox="0 0 16 16"><path d="M1 4 H3 M1 7 H3 M1 10 H3 M5 2 H7 M9 2 H11 M13 2 H15" stroke="#b4b4b4" stroke-width="1.2"/><rect x="5" y="5" width="10" height="8" fill="#b4b4b4"/></svg>
<div class="a" style="left:4px;top:513px;width:65px;height:1px;background:#2c2c2c"></div>
<svg class="a" style="left:14px;top:519px;" width="15" height="16" viewBox="0 0 15 16"><rect x="1" y="1" width="13" height="14" stroke="#b4b4b4" stroke-width="1.3" fill="none"/><path d="M1 4 H14" stroke="#b4b4b4" stroke-width="1.3"/><rect x="4" y="7" width="5" height="4" stroke="#b4b4b4" stroke-width="1.1" fill="none"/><path d="M6 10 L10 10 L10 12" stroke="#b4b4b4" stroke-width="1.1" fill="none"/></svg>
<div class="a" style="left:37px;top:516px;width:28px;height:23px;background:#1f1f1f;border-radius:3px"></div>
<svg class="a" style="left:44px;top:520px;" width="16" height="15" viewBox="0 0 16 15"><rect x="1" y="1" width="14" height="13" stroke="#b4b4b4" stroke-width="1.3" fill="#585858"/><path d="M1 3.5 H15" stroke="#b4b4b4" stroke-width="1.6"/></svg>
<svg class="a" style="left:60px;top:534px;" width="4" height="4" viewBox="0 0 4 4"><path d="M4 0 V4 H0 Z" fill="#b4b4b4"/></svg>
<div class="a" style="left:74px;top:97px;width:830px;height:30px;background:#262626"></div>
<div class="a" style="left:74px;top:97px;width:147px;height:30px;background:#323232"></div>
<div class="t" style="left:89px;top:108.19px;font-size:11px;color:#dedede;font-weight:bold;font-family:'Liberation Sans', sans-serif;">*Untitled-2 @ 125%</div>
<svg class="a" style="left:199px;top:108px;" width="8" height="8" viewBox="0 0 8 8"><path d="M0.8 0.8 L7.2 7.2 M7.2 0.8 L0.8 7.2" stroke="#d8d8d8" stroke-width="1.5"/></svg>
<div class="a" style="left:74px;top:127px;width:815px;height:14px;background:#bdbdbd"></div>
<div class="a" style="left:74px;top:141px;width:815px;height:1px;background:#4a4a4a"></div>
<div class="a" style="left:74px;top:142px;width:815px;height:563px;background:#ffffff"></div>
<div class="a" style="left:889px;top:127px;width:15px;height:578px;background:#262626"></div>
<svg class="a" style="left:891.0px;top:130.975px;" width="11" height="6.05" viewBox="0 0 11 6.05"><path d="M1 5.05 L5.5 1 L10 5.05" stroke="#6a6a6a" stroke-width="1" fill="none"/></svg>
<div class="a" style="left:890px;top:340px;width:13px;height:78px;background:#3f3f3f;border-radius:6px"></div>
<svg class="a" style="left:891.0px;top:693.975px;" width="11" height="6.05" viewBox="0 0 11 6.05"><path d="M1 1 L5.5 5.05 L10 1" stroke="#6a6a6a" stroke-width="1" fill="none"/></svg>
<div class="a" style="left:903px;top:97px;width:2px;height:623px;background:#1f1f1f"></div>
<div class="a" style="left:158px;top:262px;width:552px;height:209px;background:#000"></div>
<div class="a" style="left:313px;top:262px;width:1.3px;height:209px;background:#e8e8e8"></div>
<div class="a" style="left:412px;top:262px;width:1.3px;height:209px;background:#e8e8e8"></div>
<div class="a" style="left:508px;top:262px;width:1.3px;height:209px;background:#e8e8e8"></div>
<div class="a" style="left:613.5px;top:262px;width:1.3px;height:209px;background:#e8e8e8"></div>
<div class="t" style="left:164px;top:265.76px;font-size:17px;color:#f4f4f4;font-weight:normal;font-family:'Liberation Serif', serif;letter-spacing:-0.25px">Name</div>
<div class="t" style="left:319px;top:265.76px;font-size:17px;color:#f4f4f4;font-weight:normal;font-family:'Liberation Serif', serif;letter-spacing:-0.25px">Department</div>
<div class="t" style="left:418.5px;top:265.76px;font-size:17px;color:#f4f4f4;font-weight:normal;font-family:'Liberation Serif', serif;letter-spacing:-0.25px">Joining Date</div>
<div class="t" style="left:514.5px;top:265.76px;font-size:17px;color:#f4f4f4;font-weight:normal;font-family:'Liberation Serif', serif;letter-spacing:-0.25px">Salary ($)</div>
<div class="t" style="left:620px;top:265.76px;font-size:17px;color:#f4f4f4;font-weight:normal;font-family:'Liberation Serif', serif;letter-spacing:-0.25px">Status</div>
<div class="t" style="left:164px;top:289.01px;font-size:17px;color:#f4f4f4;font-weight:normal;font-family:'Liberation Serif', serif;letter-spacing:-0.25px">Ananya Singh</div>
<div class="t" style="left:319px;top:289.01px;font-size:17px;color:#f4f4f4;font-weight:normal;font-family:'Liberation Serif', serif;letter-spacing:-0.25px">Marketing</div>
<div class="t" style="left:418.5px;top:289.01px;font-size:17px;color:#f4f4f4;font-weight:normal;font-family:'Liberation Serif', serif;letter-spacing:-0.25px">12-Jan-21</div>
<div class="t" style="left:514.5px;top:289.01px;font-size:17px;color:#f4f4f4;font-weight:normal;font-family:'Liberation Serif', serif;letter-spacing:-0.25px">45,000</div>
<div class="t" style="left:620px;top:289.01px;font-size:17px;color:#f4f4f4;font-weight:normal;font-family:'Liberation Serif', serif;letter-spacing:-0.25px">Active</div>
<div class="t" style="left:164px;top:312.26px;font-size:17px;color:#f4f4f4;font-weight:normal;font-family:'Liberation Serif', serif;letter-spacing:-0.25px">Rohit Sharma</div>
<div class="t" style="left:319px;top:312.26px;font-size:17px;color:#f4f4f4;font-weight:normal;font-family:'Liberation Serif', serif;letter-spacing:-0.25px">Sales</div>
<div class="t" style="left:418.5px;top:312.26px;font-size:17px;color:#f4f4f4;font-weight:normal;font-family:'Liberation Serif', serif;letter-spacing:-0.25px">5-Mar-20</div>
<div class="t" style="left:514.5px;top:312.26px;font-size:17px;color:#f4f4f4;font-weight:normal;font-family:'Liberation Serif', serif;letter-spacing:-0.25px">52,000</div>
<div class="t" style="left:620px;top:312.26px;font-size:17px;color:#f4f4f4;font-weight:normal;font-family:'Liberation Serif', serif;letter-spacing:-0.25px">Active</div>
<div class="t" style="left:164px;top:335.51px;font-size:17px;color:#f4f4f4;font-weight:normal;font-family:'Liberation Serif', serif;letter-spacing:-0.25px">Priya Mehta</div>
<div class="t" style="left:319px;top:335.51px;font-size:17px;color:#f4f4f4;font-weight:normal;font-family:'Liberation Serif', serif;letter-spacing:-0.25px">HR</div>
<div class="t" style="left:418.5px;top:335.51px;font-size:17px;color:#f4f4f4;font-weight:normal;font-family:'Liberation Serif', serif;letter-spacing:-0.25px">18-Jul-19</div>
<div class="t" style="left:514.5px;top:335.51px;font-size:17px;color:#f4f4f4;font-weight:normal;font-family:'Liberation Serif', serif;letter-spacing:-0.25px">40,000</div>
<div class="t" style="left:620px;top:335.51px;font-size:17px;color:#f4f4f4;font-weight:normal;font-family:'Liberation Serif', serif;letter-spacing:-0.25px">Resigned</div>
<div class="t" style="left:164px;top:358.76px;font-size:17px;color:#f4f4f4;font-weight:normal;font-family:'Liberation Serif', serif;letter-spacing:-0.25px">Amit Verma</div>
<div class="t" style="left:319px;top:358.76px;font-size:17px;color:#f4f4f4;font-weight:normal;font-family:'Liberation Serif', serif;letter-spacing:-0.25px">Accounts</div>
<div class="t" style="left:418.5px;top:358.76px;font-size:17px;color:#f4f4f4;font-weight:normal;font-family:'Liberation Serif', serif;letter-spacing:-0.25px">25-Dec-21</div>
<div class="t" style="left:514.5px;top:358.76px;font-size:17px;color:#f4f4f4;font-weight:normal;font-family:'Liberation Serif', serif;letter-spacing:-0.25px">32,000</div>
<div class="t" style="left:620px;top:358.76px;font-size:17px;color:#f4f4f4;font-weight:normal;font-family:'Liberation Serif', serif;letter-spacing:-0.25px">Active</div>
<div class="t" style="left:164px;top:382.01px;font-size:17px;color:#f4f4f4;font-weight:normal;font-family:'Liberation Serif', serif;letter-spacing:-0.25px">Neha Kapoor</div>
<div class="t" style="left:319px;top:382.01px;font-size:17px;color:#f4f4f4;font-weight:normal;font-family:'Liberation Serif', serif;letter-spacing:-0.25px">Design</div>
<div class="t" style="left:418.5px;top:382.01px;font-size:17px;color:#f4f4f4;font-weight:normal;font-family:'Liberation Serif', serif;letter-spacing:-0.25px">14-Feb-22</div>
<div class="t" style="left:514.5px;top:382.01px;font-size:17px;color:#f4f4f4;font-weight:normal;font-family:'Liberation Serif', serif;letter-spacing:-0.25px">38,000</div>
<div class="t" style="left:620px;top:382.01px;font-size:17px;color:#f4f4f4;font-weight:normal;font-family:'Liberation Serif', serif;letter-spacing:-0.25px">Active</div>
<div class="t" style="left:164px;top:405.26px;font-size:17px;color:#f4f4f4;font-weight:normal;font-family:'Liberation Serif', serif;letter-spacing:-0.25px">Karan Malhotra</div>
<div class="t" style="left:319px;top:405.26px;font-size:17px;color:#f4f4f4;font-weight:normal;font-family:'Liberation Serif', serif;letter-spacing:-0.25px">IT</div>
<div class="t" style="left:418.5px;top:405.26px;font-size:17px;color:#f4f4f4;font-weight:normal;font-family:'Liberation Serif', serif;letter-spacing:-0.25px">2-Sep-20</div>
<div class="t" style="left:514.5px;top:405.26px;font-size:17px;color:#f4f4f4;font-weight:normal;font-family:'Liberation Serif', serif;letter-spacing:-0.25px">40,000</div>
<div class="t" style="left:620px;top:405.26px;font-size:17px;color:#f4f4f4;font-weight:normal;font-family:'Liberation Serif', serif;letter-spacing:-0.25px">Active</div>
<div class="t" style="left:164px;top:428.51px;font-size:17px;color:#f4f4f4;font-weight:normal;font-family:'Liberation Serif', serif;letter-spacing:-0.25px">Sneha Patel</div>
<div class="t" style="left:319px;top:428.51px;font-size:17px;color:#f4f4f4;font-weight:normal;font-family:'Liberation Serif', serif;letter-spacing:-0.25px">Support</div>
<div class="t" style="left:418.5px;top:428.51px;font-size:17px;color:#f4f4f4;font-weight:normal;font-family:'Liberation Serif', serif;letter-spacing:-0.25px">11-Nov-21</div>
<div class="t" style="left:514.5px;top:428.51px;font-size:17px;color:#f4f4f4;font-weight:normal;font-family:'Liberation Serif', serif;letter-spacing:-0.25px">41,000</div>
<div class="t" style="left:620px;top:428.51px;font-size:17px;color:#f4f4f4;font-weight:normal;font-family:'Liberation Serif', serif;letter-spacing:-0.25px">On Leave</div>
<div class="t" style="left:164px;top:451.76px;font-size:17px;color:#f4f4f4;font-weight:normal;font-family:'Liberation Serif', serif;letter-spacing:-0.25px">Arjun Yadav</div>
<div class="t" style="left:319px;top:451.76px;font-size:17px;color:#f4f4f4;font-weight:normal;font-family:'Liberation Serif', serif;letter-spacing:-0.25px">Marketing</div>
<div class="t" style="left:418.5px;top:451.76px;font-size:17px;color:#f4f4f4;font-weight:normal;font-family:'Liberation Serif', serif;letter-spacing:-0.25px">19-Jan-18</div>
<div class="t" style="left:514.5px;top:451.76px;font-size:17px;color:#f4f4f4;font-weight:normal;font-family:'Liberation Serif', serif;letter-spacing:-0.25px">47,000</div>
<div class="t" style="left:620px;top:451.76px;font-size:17px;color:#f4f4f4;font-weight:normal;font-family:'Liberation Serif', serif;letter-spacing:-0.25px">Active</div>
<div class="a" style="left:74px;top:142px;width:815px;height:563px;overflow:hidden">
<svg class="a" style="left:0;top:0" width="815" height="563" viewBox="0 0 815 563"><path d="M85.60 410.40 H639.10" stroke="#2a2a2a" stroke-width="1.3"/><path d="M85.60 433.60 H639.10" stroke="#2a2a2a" stroke-width="1.3"/><path d="M85.60 456.80 H639.10" stroke="#2a2a2a" stroke-width="1.3"/><path d="M85.60 480.00 H639.10" stroke="#2a2a2a" stroke-width="1.3"/><path d="M85.60 503.20 H639.10" stroke="#2a2a2a" stroke-width="1.3"/><path d="M85.60 526.40 H639.10" stroke="#2a2a2a" stroke-width="1.3"/><path d="M85.60 549.60 H639.10" stroke="#2a2a2a" stroke-width="1.3"/><path d="M85.60 572.80 H639.10" stroke="#2a2a2a" stroke-width="1.3"/><path d="M86.20 409.80 V563" stroke="#2a2a2a" stroke-width="1.3"/><path d="M241.70 409.80 V563" stroke="#2a2a2a" stroke-width="1.3"/><path d="M340.90 409.80 V563" stroke="#2a2a2a" stroke-width="1.3"/><path d="M437.20 409.80 V563" stroke="#2a2a2a" stroke-width="1.3"/><path d="M542.50 409.80 V563" stroke="#2a2a2a" stroke-width="1.3"/><path d="M638.50 409.80 V563" stroke="#2a2a2a" stroke-width="1.3"/></svg>
<div class="t" style="left:92px;top:413.76px;font-size:17px;color:#111;font-family:'Liberation Serif', serif;letter-spacing:-0.25px">Name</div>
<div class="t" style="left:247px;top:413.76px;font-size:17px;color:#111;font-family:'Liberation Serif', serif;letter-spacing:-0.25px">Department</div>
<div class="t" style="left:346px;top:413.76px;font-size:17px;color:#111;font-family:'Liberation Serif', serif;letter-spacing:-0.25px">Joining Date</div>
<div class="t" style="left:443px;top:413.76px;font-size:17px;color:#111;font-family:'Liberation Serif', serif;letter-spacing:-0.25px">Salary ($)</div>
<div class="t" style="left:548px;top:413.76px;font-size:17px;color:#111;font-family:'Liberation Serif', serif;letter-spacing:-0.25px">Status</div>
<div class="t" style="left:92px;top:436.96px;font-size:17px;color:#111;font-family:'Liberation Serif', serif;letter-spacing:-0.25px">Ananya Singh</div>
<div class="t" style="left:247px;top:436.96px;font-size:17px;color:#111;font-family:'Liberation Serif', serif;letter-spacing:-0.25px">Marketing</div>
<div class="t" style="left:346px;top:436.96px;font-size:17px;color:#111;font-family:'Liberation Serif', serif;letter-spacing:-0.25px">12-Jan-21</div>
<div class="t" style="left:443px;top:436.96px;font-size:17px;color:#111;font-family:'Liberation Serif', serif;letter-spacing:-0.25px">45,000</div>
<div class="t" style="left:548px;top:436.96px;font-size:17px;color:#111;font-family:'Liberation Serif', serif;letter-spacing:-0.25px">Active</div>
<div class="t" style="left:92px;top:460.16px;font-size:17px;color:#111;font-family:'Liberation Serif', serif;letter-spacing:-0.25px">Rohit Sharma</div>
<div class="t" style="left:247px;top:460.16px;font-size:17px;color:#111;font-family:'Liberation Serif', serif;letter-spacing:-0.25px">Sales</div>
<div class="t" style="left:346px;top:460.16px;font-size:17px;color:#111;font-family:'Liberation Serif', serif;letter-spacing:-0.25px">5-Mar-20</div>
<div class="t" style="left:443px;top:460.16px;font-size:17px;color:#111;font-family:'Liberation Serif', serif;letter-spacing:-0.25px">52,000</div>
<div class="t" style="left:548px;top:460.16px;font-size:17px;color:#111;font-family:'Liberation Serif', serif;letter-spacing:-0.25px">Active</div>
<div class="t" style="left:92px;top:483.36px;font-size:17px;color:#111;font-family:'Liberation Serif', serif;letter-spacing:-0.25px">Priya Mehta</div>
<div class="t" style="left:247px;top:483.36px;font-size:17px;color:#111;font-family:'Liberation Serif', serif;letter-spacing:-0.25px">HR</div>
<div class="t" style="left:346px;top:483.36px;font-size:17px;color:#111;font-family:'Liberation Serif', serif;letter-spacing:-0.25px">18-Jul-19</div>
<div class="t" style="left:443px;top:483.36px;font-size:17px;color:#111;font-family:'Liberation Serif', serif;letter-spacing:-0.25px">40,000</div>
<div class="t" style="left:548px;top:483.36px;font-size:17px;color:#111;font-family:'Liberation Serif', serif;letter-spacing:-0.25px">Resigned</div>
<div class="t" style="left:92px;top:506.56px;font-size:17px;color:#111;font-family:'Liberation Serif', serif;letter-spacing:-0.25px">Amit Verma</div>
<div class="t" style="left:247px;top:506.56px;font-size:17px;color:#111;font-family:'Liberation Serif', serif;letter-spacing:-0.25px">Accounts</div>
<div class="t" style="left:346px;top:506.56px;font-size:17px;color:#111;font-family:'Liberation Serif', serif;letter-spacing:-0.25px">25-Dec-21</div>
<div class="t" style="left:443px;top:506.56px;font-size:17px;color:#111;font-family:'Liberation Serif', serif;letter-spacing:-0.25px">32,000</div>
<div class="t" style="left:548px;top:506.56px;font-size:17px;color:#111;font-family:'Liberation Serif', serif;letter-spacing:-0.25px">Active</div>
<div class="t" style="left:92px;top:529.76px;font-size:17px;color:#111;font-family:'Liberation Serif', serif;letter-spacing:-0.25px">Neha Kapoor</div>
<div class="t" style="left:247px;top:529.76px;font-size:17px;color:#111;font-family:'Liberation Serif', serif;letter-spacing:-0.25px">Design</div>
<div class="t" style="left:346px;top:529.76px;font-size:17px;color:#111;font-family:'Liberation Serif', serif;letter-spacing:-0.25px">14-Feb-22</div>
<div class="t" style="left:443px;top:529.76px;font-size:17px;color:#111;font-family:'Liberation Serif', serif;letter-spacing:-0.25px">38,000</div>
<div class="t" style="left:548px;top:529.76px;font-size:17px;color:#111;font-family:'Liberation Serif', serif;letter-spacing:-0.25px">Active</div>
<div class="t" style="left:92px;top:552.96px;font-size:17px;color:#111;font-family:'Liberation Serif', serif;letter-spacing:-0.25px">Karan Malhotra</div>
<div class="t" style="left:247px;top:552.96px;font-size:17px;color:#111;font-family:'Liberation Serif', serif;letter-spacing:-0.25px">IT</div>
<div class="t" style="left:346px;top:552.96px;font-size:17px;color:#111;font-family:'Liberation Serif', serif;letter-spacing:-0.25px">2-Sep-20</div>
<div class="t" style="left:443px;top:552.96px;font-size:17px;color:#111;font-family:'Liberation Serif', serif;letter-spacing:-0.25px">40,000</div>
<div class="t" style="left:548px;top:552.96px;font-size:17px;color:#111;font-family:'Liberation Serif', serif;letter-spacing:-0.25px">Active</div>
</div>
<div class="t" style="left:641.5px;top:361.5px;font-size:16px;font-family:'Liberation Sans',sans-serif;color:rgba(255,255,255,0.75);-webkit-text-stroke:0.5px rgba(120,120,120,0.8);transform:translate(-50%,-50%) rotate(-45deg);transform-origin:center">Copyright &copy; 2025 - www.p30download.com</div>
<div class="a" style="left:74px;top:705px;width:829px;height:15px;background:#2c2c2c"></div>
<div class="t" style="left:88px;top:706.99px;font-size:11px;color:#b8b8b8;font-weight:normal;font-family:'Liberation Sans', sans-serif;transform:scaleX(0.89);transform-origin:0 0;">125%</div>
<svg class="a" style="left:129.0px;top:709.7px;" width="10" height="5.6" viewBox="0 0 10 5.6"><path d="M1 1 L5.0 4.6 L9 1" stroke="#9a9a9a" stroke-width="1" fill="none"/></svg>
<svg class="a" style="left:150px;top:707px;" width="9" height="10" viewBox="0 0 9 10"><path d="M1 1 V9" stroke="#aaa" stroke-width="1.4"/><path d="M8.5 1 L3 5 L8.5 9 Z" fill="#aaa"/></svg>
<svg class="a" style="left:173px;top:707px;" width="7" height="10" viewBox="0 0 7 10"><path d="M6.5 1 L1 5 L6.5 9 Z" fill="#aaa"/></svg>
<div class="a" style="left:190.5px;top:706px;width:90px;height:15px;background:#262626;border:1px solid #3a3a3a;border-radius:2px"></div>
<div class="a" style="left:262px;top:706px;width:1px;height:14px;background:#3a3a3a"></div>
<div class="t" style="left:194px;top:706.69px;font-size:11px;color:#d8d8d8;font-weight:normal;font-family:'Liberation Sans', sans-serif;">2</div>
<svg class="a" style="left:266.5px;top:709.7px;" width="10" height="5.6" viewBox="0 0 10 5.6"><path d="M1 1 L5.0 4.6 L9 1" stroke="#9a9a9a" stroke-width="1" fill="none"/></svg>
<div class="a" style="left:280px;top:706px;width:1px;height:14px;background:#3a3a3a"></div>
<svg class="a" style="left:293px;top:707px;" width="7" height="10" viewBox="0 0 7 10"><path d="M0.5 1 L6 5 L0.5 9 Z" fill="#aaa"/></svg>
<svg class="a" style="left:313px;top:707px;" width="9" height="10" viewBox="0 0 9 10"><path d="M8 1 V9" stroke="#aaa" stroke-width="1.4"/><path d="M0.5 1 L6 5 L0.5 9 Z" fill="#aaa"/></svg>
<svg class="a" style="left:337px;top:706px;" width="17" height="13" viewBox="0 0 17 13"><path d="M2 12 V6 Q2 1.5 6.5 1.5 Q11 1.5 11 6 V7 H8 V12" stroke="#9a9a9a" stroke-width="2.2" fill="none"/><path d="M14 10 L16 10 L15 11.5 Z" fill="#9a9a9a"/></svg>
<div class="t" style="left:370px;top:706.99px;font-size:11px;color:#a8a8a8;font-weight:normal;font-family:'Liberation Sans', sans-serif;transform:scaleX(0.935);transform-origin:0 0;">[Basic] (working)</div>
<svg class="a" style="left:471.0px;top:709.7px;" width="10" height="5.6" viewBox="0 0 10 5.6"><path d="M1 1 L5.0 4.6 L9 1" stroke="#9a9a9a" stroke-width="1" fill="none"/></svg>
<div class="a" style="left:496px;top:707px;width:11px;height:11px;background:#1fa51f;border-radius:50%"></div>
<div class="t" style="left:512px;top:706.99px;font-size:11px;color:#c8c8c8;font-weight:normal;font-family:'Liberation Sans', sans-serif;transform:scaleX(0.91);transform-origin:0 0;">No errors</div>
<svg class="a" style="left:573.0px;top:709.7px;" width="10" height="5.6" viewBox="0 0 10 5.6"><path d="M1 1 L5.0 4.6 L9 1" stroke="#9a9a9a" stroke-width="1" fill="none"/></svg>
<div class="a" style="left:588px;top:705px;width:280px;height:15px;background:#262626"></div>
<svg class="a" style="left:595px;top:708px;" width="6" height="9" viewBox="0 0 6 9"><path d="M5 0.5 L1 4.5 L5 8.5" stroke="#5a5a5a" stroke-width="1" fill="none"/></svg>
<div class="a" style="left:689px;top:705px;width:78px;height:15px;background:#3e3e3e;border-radius:7px"></div>
<svg class="a" style="left:856px;top:708px;" width="6" height="9" viewBox="0 0 6 9"><path d="M1 0.5 L5 4.5 L1 8.5" stroke="#5a5a5a" stroke-width="1" fill="none"/></svg>
<svg class="a" style="left:871px;top:706px;" width="16" height="13" viewBox="0 0 16 13"><rect x="1" y="1" width="14" height="11" stroke="#9a9a9a" stroke-width="1.4" fill="none"/><path d="M8 1 V12" stroke="#9a9a9a" stroke-width="1.4"/></svg>
<svg class="a" style="left:892px;top:708px;" width="11" height="11" viewBox="0 0 11 11"><path d="M10 1 V10 M7.5 4 V10 M5 6.5 V10 M2.5 9 V10" stroke="#4a4a4a" stroke-width="1"/></svg>
<div class="a" style="left:905px;top:97px;width:122px;height:12px;background:#282828"></div>
<svg class="a" style="left:1011px;top:100.5px;" width="8" height="5" viewBox="0 0 8 5"><path d="M3.2 0.3 L0.3 2.3 L3.2 4.3 L2.4 2.3 Z M7.2 0.3 L4.3 2.3 L7.2 4.3 L6.4 2.3 Z" fill="#a8a8a8" stroke="#a8a8a8" stroke-width="0.6" stroke-linejoin="round"/></svg>
<div class="a" style="left:1024px;top:97px;width:3px;height:623px;background:#1f1f1f"></div>
<div class="a" style="left:905px;top:206px;width:119px;height:2px;background:#1f1f1f"></div>
<div class="a" style="left:905px;top:275px;width:119px;height:2px;background:#1f1f1f"></div>
<div class="a" style="left:905px;top:344px;width:119px;height:2px;background:#1f1f1f"></div>
<div class="a" style="left:905px;top:441px;width:119px;height:2px;background:#1f1f1f"></div>
<div class="a" style="left:905px;top:482px;width:119px;height:2px;background:#1f1f1f"></div>
<div class="a" style="left:905px;top:523px;width:119px;height:2px;background:#1f1f1f"></div>
<div class="a" style="left:905px;top:564px;width:119px;height:2px;background:#1f1f1f"></div>
<div class="a" style="left:955px;top:112px;width:1px;height:3px;background:#2a2a2a"></div>
<div class="a" style="left:957px;top:112px;width:1px;height:3px;background:#2a2a2a"></div>
<div class="a" style="left:959px;top:112px;width:1px;height:3px;background:#2a2a2a"></div>
<div class="a" style="left:961px;top:112px;width:1px;height:3px;background:#2a2a2a"></div>
<div class="a" style="left:963px;top:112px;width:1px;height:3px;background:#2a2a2a"></div>
<div class="a" style="left:965px;top:112px;width:1px;height:3px;background:#2a2a2a"></div>
<div class="a" style="left:967px;top:112px;width:1px;height:3px;background:#2a2a2a"></div>
<div class="a" style="left:969px;top:112px;width:1px;height:3px;background:#2a2a2a"></div>
<div class="a" style="left:971px;top:112px;width:1px;height:3px;background:#2a2a2a"></div>
<div class="a" style="left:973px;top:112px;width:1px;height:3px;background:#2a2a2a"></div>
<div class="a" style="left:975px;top:112px;width:1px;height:3px;background:#2a2a2a"></div>
<div class="a" style="left:955px;top:211px;width:1px;height:3px;background:#2a2a2a"></div>
<div class="a" style="left:957px;top:211px;width:1px;height:3px;background:#2a2a2a"></div>
<div class="a" style="left:959px;top:211px;width:1px;height:3px;background:#2a2a2a"></div>
<div class="a" style="left:961px;top:211px;width:1px;height:3px;background:#2a2a2a"></div>
<div class="a" style="left:963px;top:211px;width:1px;height:3px;background:#2a2a2a"></div>
<div class="a" style="left:965px;top:211px;width:1px;height:3px;background:#2a2a2a"></div>
<div class="a" style="left:967px;top:211px;width:1px;height:3px;background:#2a2a2a"></div>
<div class="a" style="left:969px;top:211px;width:1px;height:3px;background:#2a2a2a"></div>
<div class="a" style="left:971px;top:211px;width:1px;height:3px;background:#2a2a2a"></div>
<div class="a" style="left:973px;top:211px;width:1px;height:3px;background:#2a2a2a"></div>
<div class="a" style="left:975px;top:211px;width:1px;height:3px;background:#2a2a2a"></div>
<div class="a" style="left:955px;top:280px;width:1px;height:3px;background:#2a2a2a"></div>
<div class="a" style="left:957px;top:280px;width:1px;height:3px;background:#2a2a2a"></div>
<div class="a" style="left:959px;top:280px;width:1px;height:3px;background:#2a2a2a"></div>
<div class="a" style="left:961px;top:280px;width:1px;height:3px;background:#2a2a2a"></div>
<div class="a" style="left:963px;top:280px;width:1px;height:3px;background:#2a2a2a"></div>
<div class="a" style="left:965px;top:280px;width:1px;height:3px;background:#2a2a2a"></div>
<div class="a" style="left:967px;top:280px;width:1px;height:3px;background:#2a2a2a"></div>
<div class="a" style="left:969px;top:280px;width:1px;height:3px;background:#2a2a2a"></div>
<div class="a" style="left:971px;top:280px;width:1px;height:3px;background:#2a2a2a"></div>
<div class="a" style="left:973px;top:280px;width:1px;height:3px;background:#2a2a2a"></div>
<div class="a" style="left:975px;top:280px;width:1px;height:3px;background:#2a2a2a"></div>
<div class="a" style="left:955px;top:349px;width:1px;height:3px;background:#2a2a2a"></div>
<div class="a" style="left:957px;top:349px;width:1px;height:3px;background:#2a2a2a"></div>
<div class="a" style="left:959px;top:349px;width:1px;height:3px;background:#2a2a2a"></div>
<div class="a" style="left:961px;top:349px;width:1px;height:3px;background:#2a2a2a"></div>
<div class="a" style="left:963px;top:349px;width:1px;height:3px;background:#2a2a2a"></div>
<div class="a" style="left:965px;top:349px;width:1px;height:3px;background:#2a2a2a"></div>
<div class="a" style="left:967px;top:349px;width:1px;height:3px;background:#2a2a2a"></div>
<div class="a" style="left:969px;top:349px;width:1px;height:3px;background:#2a2a2a"></div>
<div class="a" style="left:971px;top:349px;width:1px;height:3px;background:#2a2a2a"></div>
<div class="a" style="left:973px;top:349px;width:1px;height:3px;background:#2a2a2a"></div>
<div class="a" style="left:975px;top:349px;width:1px;height:3px;background:#2a2a2a"></div>
<div class="a" style="left:955px;top:446px;width:1px;height:3px;background:#2a2a2a"></div>
<div class="a" style="left:957px;top:446px;width:1px;height:3px;background:#2a2a2a"></div>
<div class="a" style="left:959px;top:446px;width:1px;height:3px;background:#2a2a2a"></div>
<div class="a" style="left:961px;top:446px;width:1px;height:3px;background:#2a2a2a"></div>
<div class="a" style="left:963px;top:446px;width:1px;height:3px;background:#2a2a2a"></div>
<div class="a" style="left:965px;top:446px;width:1px;height:3px;background:#2a2a2a"></div>
<div class="a" style="left:967px;top:446px;width:1px;height:3px;background:#2a2a2a"></div>
<div class="a" style="left:969px;top:446px;width:1px;height:3px;background:#2a2a2a"></div>
<div class="a" style="left:971px;top:446px;width:1px;height:3px;background:#2a2a2a"></div>
<div class="a" style="left:973px;top:446px;width:1px;height:3px;background:#2a2a2a"></div>
<div class="a" style="left:975px;top:446px;width:1px;height:3px;background:#2a2a2a"></div>
<div class="a" style="left:955px;top:487px;width:1px;height:3px;background:#2a2a2a"></div>
<div class="a" style="left:957px;top:487px;width:1px;height:3px;background:#2a2a2a"></div>
<div class="a" style="left:959px;top:487px;width:1px;height:3px;background:#2a2a2a"></div>
<div class="a" style="left:961px;top:487px;width:1px;height:3px;background:#2a2a2a"></div>
<div class="a" style="left:963px;top:487px;width:1px;height:3px;background:#2a2a2a"></div>
<div class="a" style="left:965px;top:487px;width:1px;height:3px;background:#2a2a2a"></div>
<div class="a" style="left:967px;top:487px;width:1px;height:3px;background:#2a2a2a"></div>
<div class="a" style="left:969px;top:487px;width:1px;height:3px;background:#2a2a2a"></div>
<div class="a" style="left:971px;top:487px;width:1px;height:3px;background:#2a2a2a"></div>
<div class="a" style="left:973px;top:487px;width:1px;height:3px;background:#2a2a2a"></div>
<div class="a" style="left:975px;top:487px;width:1px;height:3px;background:#2a2a2a"></div>
<div class="a" style="left:955px;top:528px;width:1px;height:3px;background:#2a2a2a"></div>
<div class="a" style="left:957px;top:528px;width:1px;height:3px;background:#2a2a2a"></div>
<div class="a" style="left:959px;top:528px;width:1px;height:3px;background:#2a2a2a"></div>
<div class="a" style="left:961px;top:528px;width:1px;height:3px;background:#2a2a2a"></div>
<div class="a" style="left:963px;top:528px;width:1px;height:3px;background:#2a2a2a"></div>
<div class="a" style="left:965px;top:528px;width:1px;height:3px;background:#2a2a2a"></div>
<div class="a" style="left:967px;top:528px;width:1px;height:3px;background:#2a2a2a"></div>
<div class="a" style="left:969px;top:528px;width:1px;height:3px;background:#2a2a2a"></div>
<div class="a" style="left:971px;top:528px;width:1px;height:3px;background:#2a2a2a"></div>
<div class="a" style="left:973px;top:528px;width:1px;height:3px;background:#2a2a2a"></div>
<div class="a" style="left:975px;top:528px;width:1px;height:3px;background:#2a2a2a"></div>
<div class="t" style="left:943.5px;top:128.69px;font-size:11px;color:#dcdcdc;font-weight:bold;font-family:'Liberation Sans', sans-serif;transform:scaleX(0.92);transform-origin:0 0;">Pages</div>
<div class="t" style="left:943.5px;top:156.69px;font-size:11px;color:#dcdcdc;font-weight:bold;font-family:'Liberation Sans', sans-serif;transform:scaleX(0.92);transform-origin:0 0;">Layers</div>
<div class="t" style="left:943.5px;top:184.69px;font-size:11px;color:#dcdcdc;font-weight:bold;font-family:'Liberation Sans', sans-serif;transform:scaleX(0.92);transform-origin:0 0;">Links</div>
<div class="t" style="left:943.5px;top:225.69px;font-size:11px;color:#dcdcdc;font-weight:bold;font-family:'Liberation Sans', sans-serif;transform:scaleX(0.92);transform-origin:0 0;">Stroke</div>
<div class="t" style="left:943.5px;top:253.69px;font-size:11px;color:#dcdcdc;font-weight:bold;font-family:'Liberation Sans', sans-serif;transform:scaleX(0.92);transform-origin:0 0;">Color</div>
<div class="t" style="left:943.5px;top:294.69px;font-size:11px;color:#dcdcdc;font-weight:bold;font-family:'Liberation Sans', sans-serif;transform:scaleX(0.92);transform-origin:0 0;">Swatches</div>
<div class="t" style="left:943.5px;top:322.69px;font-size:11px;color:#dcdcdc;font-weight:bold;font-family:'Liberation Sans', sans-serif;transform:scaleX(0.92);transform-origin:0 0;">Text to Ima...</div>
<div class="t" style="left:943.5px;top:363.69px;font-size:11px;color:#dcdcdc;font-weight:bold;font-family:'Liberation Sans', sans-serif;transform:scaleX(0.92);transform-origin:0 0;">Table</div>
<div class="t" style="left:943.5px;top:391.69px;font-size:11px;color:#dcdcdc;font-weight:bold;font-family:'Liberation Sans', sans-serif;transform:scaleX(0.92);transform-origin:0 0;">Cell Styles</div>
<div class="t" style="left:943.5px;top:419.69px;font-size:11px;color:#dcdcdc;font-weight:bold;font-family:'Liberation Sans', sans-serif;transform:scaleX(0.92);transform-origin:0 0;">Table Styles</div>
<div class="t" style="left:943.5px;top:460.69px;font-size:11px;color:#dcdcdc;font-weight:bold;font-family:'Liberation Sans', sans-serif;transform:scaleX(0.92);transform-origin:0 0;">Character</div>
<div class="t" style="left:943.5px;top:501.69px;font-size:11px;color:#dcdcdc;font-weight:bold;font-family:'Liberation Sans', sans-serif;transform:scaleX(0.92);transform-origin:0 0;">Paragraph ...</div>
<div class="t" style="left:943.5px;top:542.69px;font-size:11px;color:#dcdcdc;font-weight:bold;font-family:'Liberation Sans', sans-serif;transform:scaleX(0.92);transform-origin:0 0;">Character S...</div>
<svg class="a" style="left:916px;top:123.0px;" width="20" height="20" viewBox="0 0 20 20"><path d="M0.7 8 L4.6 4.3 L8 4.3 L8 17.6 L0.7 17.6 Z M18.4 8 L14.5 4.3 L11 4.3 L11 17.6 L18.4 17.6 Z" fill="#b8b8b8"/><path d="M0.5 8.3 H4.8 V4 M18.6 8.3 H14.3 V4" stroke="#323232" stroke-width="0.9" fill="none"/><path d="M9.5 1.2 V20.5" stroke="#b8b8b8" stroke-width="1.1"/></svg>
<svg class="a" style="left:916px;top:151.0px;" width="20" height="20" viewBox="0 0 20 20"><path d="M9.5 1.8 L18 7.6 L9.5 13.4 L1 7.6 Z" fill="#b8b8b8"/><path d="M1 12.3 L9.5 18.4 L18 12.3 L18 13.6 L9.5 19.6 L1 13.6 Z" fill="#b8b8b8" stroke="#b8b8b8" stroke-width="1.4" stroke-linejoin="round"/></svg>
<svg class="a" style="left:916px;top:179.0px;" width="20" height="20" viewBox="0 0 20 20"><rect x="1" y="6" width="12" height="8" rx="4" stroke="#b8b8b8" stroke-width="1.9" fill="none"/><rect x="7" y="6" width="12" height="8" rx="4" stroke="#b8b8b8" stroke-width="1.9" fill="none"/></svg>
<svg class="a" style="left:916px;top:220.0px;" width="20" height="20" viewBox="0 0 20 20"><path d="M1 4 H18 M1 9.5 H18 M1 15 H18" stroke="#b8b8b8" stroke-width="2"/></svg>
<svg class="a" style="left:916px;top:248.0px;" width="20" height="20" viewBox="0 0 20 20"><path d="M10 2 Q18.5 2 18.5 9 Q18.5 12 15 12 Q12.5 12 12.5 14.5 Q12.5 17.5 9 17.5 Q1 17.5 1 10 Q1 2 10 2 Z" fill="#b8b8b8"/><circle cx="5.5" cy="9.5" r="1.5" fill="#323232"/><circle cx="8.5" cy="5.5" r="1.5" fill="#323232"/><circle cx="13" cy="6" r="1.5" fill="#323232"/><circle cx="7" cy="13.5" r="1.5" fill="#323232"/></svg>
<svg class="a" style="left:916px;top:289.0px;" width="20" height="20" viewBox="0 0 20 20"><rect x="1" y="4" width="5" height="5" fill="#b8b8b8"/><rect x="7" y="4" width="5" height="5" fill="#777"/><rect x="13" y="4" width="5" height="5" fill="#b8b8b8"/><rect x="1" y="10" width="5" height="5" fill="#777"/><rect x="7" y="10" width="5" height="5" fill="#b8b8b8"/><rect x="13" y="10" width="5" height="5" fill="#777"/></svg>
<svg class="a" style="left:916px;top:317.0px;" width="20" height="20" viewBox="0 0 20 20"><path d="M10 3 H3 Q1.5 3 1.5 4.5 V16.5 Q1.5 18 3 18 H15 Q16.5 18 16.5 16.5 V11" stroke="#b8b8b8" stroke-width="1.5" fill="none"/><path d="M14.5 0 L15.5 4 L19.5 5 L15.5 6 L14.5 10 L13.5 6 L9.5 5 L13.5 4 Z" fill="#b8b8b8"/><path d="M7 9.5 L7.6 11.4 L9.5 12 L7.6 12.6 L7 14.5 L6.4 12.6 L4.5 12 L6.4 11.4 Z" fill="#b8b8b8"/></svg>
<svg class="a" style="left:916px;top:358.0px;" width="20" height="20" viewBox="0 0 20 20"><rect x="1.5" y="2.5" width="15" height="14" stroke="#b8b8b8" stroke-width="1.3" fill="none"/><path d="M1.5 6 H16.5 M1.5 9.5 H16.5 M1.5 13 H16.5 M5 6 V16.5" stroke="#b8b8b8" stroke-width="1.2"/></svg>
<svg class="a" style="left:916px;top:386.0px;" width="20" height="20" viewBox="0 0 20 20"><rect x="5" y="1.5" width="13" height="12" stroke="#b8b8b8" stroke-width="1.3" fill="none"/><path d="M5 4.5 H18" stroke="#b8b8b8" stroke-width="1.2"/><rect x="9" y="7" width="6" height="5" fill="#7a7a7a"/><rect x="1" y="11" width="6" height="6" stroke="#b8b8b8" stroke-width="1.3" fill="#323232"/><rect x="3.5" y="13.5" width="6" height="6" stroke="#b8b8b8" stroke-width="1.3" fill="#323232"/></svg>
<svg class="a" style="left:916px;top:414.0px;" width="20" height="20" viewBox="0 0 20 20"><rect x="5" y="1.5" width="13" height="12" stroke="#b8b8b8" stroke-width="1.3" fill="none"/><path d="M5 4.5 H18 M8 7.3 H18 M8 10.2 H18" stroke="#b8b8b8" stroke-width="1.2"/><rect x="1" y="11" width="6" height="6" stroke="#b8b8b8" stroke-width="1.3" fill="#323232"/><rect x="3.5" y="13.5" width="6" height="6" stroke="#b8b8b8" stroke-width="1.3" fill="#323232"/></svg>
<svg class="a" style="left:916px;top:455.0px;" width="20" height="20" viewBox="0 0 20 20"><path d="M1 17 L6.5 2 L12 17 M3 11.5 H10" stroke="#b8b8b8" stroke-width="1.5" fill="none"/><path d="M16.5 1 V19" stroke="#b8b8b8" stroke-width="1.3"/></svg>
<svg class="a" style="left:916px;top:496.0px;" width="20" height="20" viewBox="0 0 20 20"><path d="M12.5 2 H19 M14.5 2 V17 M17 2 V17" stroke="#b8b8b8" stroke-width="1.3"/><path d="M14.5 2 Q10 2 10 6 Q10 9.5 14.5 9.5 Z" fill="#b8b8b8"/><rect x="1" y="11" width="6" height="6" stroke="#b8b8b8" stroke-width="1.3" fill="#323232"/><rect x="3.5" y="13.5" width="6" height="6" stroke="#b8b8b8" stroke-width="1.3" fill="#323232"/></svg>
<svg class="a" style="left:916px;top:537.0px;" width="20" height="20" viewBox="0 0 20 20"><path d="M8 15 L13.5 1 L19 15 M10 10 H17" stroke="#b8b8b8" stroke-width="1.5" fill="none"/><rect x="1" y="11" width="6" height="6" stroke="#b8b8b8" stroke-width="1.3" fill="#323232"/><rect x="3.5" y="13.5" width="6" height="6" stroke="#b8b8b8" stroke-width="1.3" fill="#323232"/></svg>
<div class="a" style="left:1027px;top:97px;width:253px;height:12px;background:#282828"></div>
<svg class="a" style="left:1265px;top:100.5px;" width="8" height="5" viewBox="0 0 8 5"><path d="M0.3 0.3 L3.2 2.3 L0.3 4.3 L1.1 2.3 Z M4.3 0.3 L7.2 2.3 L4.3 4.3 L5.1 2.3 Z" fill="#a8a8a8" stroke="#a8a8a8" stroke-width="0.6" stroke-linejoin="round"/></svg>
<div class="a" style="left:1027px;top:109px;width:253px;height:28px;background:#262626"></div>
<div class="a" style="left:1104px;top:109px;width:86px;height:28px;background:#2a2a2a"></div>
<div class="a" style="left:1027px;top:109px;width:77px;height:28px;background:#323232"></div>
<div class="t" style="left:1040px;top:118.19px;font-size:11px;color:#e0e0e0;font-weight:bold;font-family:'Liberation Sans', sans-serif;transform:scaleX(0.937);transform-origin:0 0;">Properties</div>
<div class="t" style="left:1117px;top:118.19px;font-size:11px;color:#9a9a9a;font-weight:bold;font-family:'Liberation Sans', sans-serif;transform:scaleX(0.9);transform-origin:0 0;">CC Libraries</div>
<svg class="a" style="left:1267.0px;top:140.2px;" width="10" height="5.6" viewBox="0 0 10 5.6"><path d="M1 4.6 L5.0 1 L9 4.6" stroke="#5a5a5a" stroke-width="1" fill="none"/></svg>
<div class="a" style="left:1267px;top:150px;width:10px;height:306px;background:#3c3c3c;border-radius:5px"></div>
<svg class="a" style="left:1267.0px;top:694.2px;" width="10" height="5.6" viewBox="0 0 10 5.6"><path d="M1 1 L5.0 4.6 L9 1" stroke="#5a5a5a" stroke-width="1" fill="none"/></svg>
<div class="t" style="left:1037px;top:147.69px;font-size:11px;color:#d8d8d8;font-weight:normal;font-family:'Liberation Sans', sans-serif;transform:scaleX(0.88);transform-origin:0 0;">Table Grids</div>
<div class="a" style="left:1027px;top:169px;width:239px;height:1px;background:#2a2a2a"></div>
<div class="t" style="left:1037px;top:182.69px;font-size:11px;color:#d8d8d8;font-weight:normal;font-family:'Liberation Sans', sans-serif;transform:scaleX(0.876);transform-origin:0 0;">Appearance</div>
<svg class="a" style="left:1040px;top:205px;" width="17" height="17" viewBox="0 0 17 17"><rect width="17" height="17" fill="#ffffff"/><path d="M0.5 16.5 L16.5 0.5" stroke="#e0101a" stroke-width="1.8"/></svg>
<div class="t" style="left:1071px;top:208.19px;font-size:11px;color:#d8d8d8;font-weight:normal;font-family:'Liberation Sans', sans-serif;transform:scaleX(0.85);transform-origin:0 0;">Fill</div>
<div class="a" style="left:1040px;top:234px;width:17px;height:17px;background:#000"></div>
<div class="a" style="left:1044px;top:238px;width:9px;height:9px;background:#2b2b2b"></div>
<div class="t" style="left:1070.5px;top:237.69px;font-size:11px;color:#c8c8c8;font-weight:normal;font-family:'Liberation Sans', sans-serif;transform:scaleX(0.88);transform-origin:0 0;text-decoration:underline">Stroke&nbsp;</div>
<div class="a" style="left:1133px;top:232px;width:70px;height:20px;background:#2b2b2b;border:1px solid #424242;border-radius:3px;box-sizing:border-box"></div>
<div class="a" style="left:1150px;top:233px;width:1px;height:18px;background:#424242"></div>
<svg class="a" style="left:1136.5px;top:234.7px;" width="10" height="5.6" viewBox="0 0 10 5.6"><path d="M1 4.6 L5.0 1 L9 4.6" stroke="#a0a0a0" stroke-width="1.0" fill="none"/></svg>
<svg class="a" style="left:1136.5px;top:243.7px;" width="10" height="5.6" viewBox="0 0 10 5.6"><path d="M1 1 L5.0 4.6 L9 1" stroke="#a0a0a0" stroke-width="1.0" fill="none"/></svg>
<div class="a" style="left:1184px;top:233px;width:1px;height:18px;background:#424242"></div>
<svg class="a" style="left:1188.5px;top:239.2px;" width="10" height="5.6" viewBox="0 0 10 5.6"><path d="M1 1 L5.0 4.6 L9 1" stroke="#a0a0a0" stroke-width="1.0" fill="none"/></svg>
<div class="t" style="left:1154px;top:237.99px;font-size:11px;color:#dcdcdc;font-weight:normal;font-family:'Liberation Sans', sans-serif;transform:scaleX(0.96);transform-origin:0 0;">0 pt</div>
<div class="a" style="left:1208px;top:232px;width:55px;height:20px;background:#2b2b2b;border:1px solid #424242;border-radius:3px;box-sizing:border-box"></div>
<div class="a" style="left:1209px;top:233px;width:36px;height:18px;background:#e1e1e1;border-radius:2px 0 0 2px"></div>
<div class="a" style="left:1213px;top:237px;width:28px;height:10px;background:#000"></div>
<div class="a" style="left:1245px;top:233px;width:1px;height:18px;background:#424242"></div>
<svg class="a" style="left:1248.0px;top:238.975px;" width="11" height="6.05" viewBox="0 0 11 6.05"><path d="M1 1 L5.5 5.05 L10 1" stroke="#a0a0a0" stroke-width="1.0" fill="none"/></svg>
<div class="a" style="left:1027px;top:266px;width:239px;height:1px;background:#2a2a2a"></div>
<div class="t" style="left:1037px;top:280.19px;font-size:11px;color:#d8d8d8;font-weight:normal;font-family:'Liberation Sans', sans-serif;transform:scaleX(0.87);transform-origin:0 0;">Character</div>
<div class="a" style="left:1037px;top:299px;width:220px;height:20px;background:#2b2b2b;border:1px solid #424242;border-radius:3px;box-sizing:border-box"></div>
<div class="a" style="left:1238px;top:300px;width:1px;height:18px;background:#424242"></div>
<svg class="a" style="left:1242.5px;top:306.2px;" width="10" height="5.6" viewBox="0 0 10 5.6"><path d="M1 1 L5.0 4.6 L9 1" stroke="#a0a0a0" stroke-width="1.0" fill="none"/></svg>
<svg class="a" style="left:1040px;top:303px;" width="24" height="14" viewBox="0 0 24 14"><circle cx="4.8" cy="5" r="3.6" stroke="#bdbdbd" stroke-width="1.2" fill="none"/><path d="M7.5 7.7 L10.5 10.8" stroke="#bdbdbd" stroke-width="1.3"/><path d="M12 5.5 L14.5 8 L17 5.5" stroke="#bdbdbd" stroke-width="1.1" fill="none"/></svg>
<div class="t" style="left:1060px;top:304.69px;font-size:11px;color:#dcdcdc;font-weight:normal;font-family:'Liberation Sans', sans-serif;transform:scaleX(0.84);transform-origin:0 0;">Minion Pro</div>
<div class="a" style="left:1037px;top:326px;width:220px;height:20px;background:#2b2b2b;border:1px solid #424242;border-radius:3px;box-sizing:border-box"></div>
<div class="a" style="left:1238px;top:327px;width:1px;height:18px;background:#424242"></div>
<svg class="a" style="left:1242.5px;top:333.2px;" width="10" height="5.6" viewBox="0 0 10 5.6"><path d="M1 1 L5.0 4.6 L9 1" stroke="#a0a0a0" stroke-width="1.0" fill="none"/></svg>
<div class="t" style="left:1041px;top:331.99px;font-size:11px;color:#dcdcdc;font-weight:normal;font-family:'Liberation Sans', sans-serif;transform:scaleX(0.86);transform-origin:0 0;">Regular</div>
<div class="a" style="left:1060px;top:352px;width:80px;height:19px;background:#2b2b2b;border:1px solid #424242;border-radius:3px;box-sizing:border-box"></div>
<div class="a" style="left:1078px;top:353px;width:1px;height:17px;background:#424242"></div>
<svg class="a" style="left:1064.0px;top:354.2px;" width="10" height="5.6" viewBox="0 0 10 5.6"><path d="M1 4.6 L5.0 1 L9 4.6" stroke="#a0a0a0" stroke-width="1.0" fill="none"/></svg>
<svg class="a" style="left:1064.0px;top:363.2px;" width="10" height="5.6" viewBox="0 0 10 5.6"><path d="M1 1 L5.0 4.6 L9 1" stroke="#a0a0a0" stroke-width="1.0" fill="none"/></svg>
<div class="a" style="left:1121px;top:353px;width:1px;height:17px;background:#424242"></div>
<svg class="a" style="left:1125.5px;top:358.7px;" width="10" height="5.6" viewBox="0 0 10 5.6"><path d="M1 1 L5.0 4.6 L9 1" stroke="#a0a0a0" stroke-width="1.0" fill="none"/></svg>
<div class="t" style="left:1082px;top:357.49px;font-size:11px;color:#dcdcdc;font-weight:normal;font-family:'Liberation Sans', sans-serif;transform:scaleX(0.96);transform-origin:0 0;">12 pt</div>
<div class="a" style="left:1177px;top:352px;width:80px;height:19px;background:#2b2b2b;border:1px solid #424242;border-radius:3px;box-sizing:border-box"></div>
<div class="a" style="left:1195px;top:353px;width:1px;height:17px;background:#424242"></div>
<svg class="a" style="left:1181.0px;top:354.2px;" width="10" height="5.6" viewBox="0 0 10 5.6"><path d="M1 4.6 L5.0 1 L9 4.6" stroke="#a0a0a0" stroke-width="1.0" fill="none"/></svg>
<svg class="a" style="left:1181.0px;top:363.2px;" width="10" height="5.6" viewBox="0 0 10 5.6"><path d="M1 1 L5.0 4.6 L9 1" stroke="#a0a0a0" stroke-width="1.0" fill="none"/></svg>
<div class="a" style="left:1238px;top:353px;width:1px;height:17px;background:#424242"></div>
<svg class="a" style="left:1242.5px;top:358.7px;" width="10" height="5.6" viewBox="0 0 10 5.6"><path d="M1 1 L5.0 4.6 L9 1" stroke="#a0a0a0" stroke-width="1.0" fill="none"/></svg>
<div class="t" style="left:1199px;top:357.49px;font-size:11px;color:#dcdcdc;font-weight:normal;font-family:'Liberation Sans', sans-serif;transform:scaleX(0.96);transform-origin:0 0;">(14.4 pt)</div>
<svg class="a" style="left:1037px;top:352px;" width="20" height="18" viewBox="0 0 20 18"><text x="0" y="17" font-family="Liberation Serif" font-weight="bold" font-size="11" fill="#bdbdbd">T</text><text x="6" y="17" font-family="Liberation Serif" font-weight="bold" font-size="19" fill="#bdbdbd">T</text></svg>
<svg class="a" style="left:1153px;top:351px;" width="20" height="20" viewBox="0 0 20 20"><path d="M2.5 9 V19 M0.5 11 L2.5 9 L4.5 11 M0.5 17 L2.5 19 L4.5 17" stroke="#bdbdbd" stroke-width="1.2" fill="none"/><text x="6.5" y="9" font-family="Liberation Sans" font-size="9.5" fill="#bdbdbd">A</text><text x="6.5" y="19" font-family="Liberation Sans" font-size="9.5" fill="#bdbdbd">A</text><path d="M5.5 9.5 H17 M5.5 19.5 H17" stroke="#bdbdbd" stroke-width="1"/></svg>
<div class="a" style="left:1060px;top:378px;width:80px;height:20px;background:#2b2b2b;border:1px solid #424242;border-radius:3px;box-sizing:border-box"></div>
<div class="a" style="left:1061px;top:379px;width:17px;height:18px;background:#383838"></div>
<div class="a" style="left:1078px;top:379px;width:1px;height:18px;background:#424242"></div>
<svg class="a" style="left:1064.0px;top:380.7px;" width="10" height="5.6" viewBox="0 0 10 5.6"><path d="M1 4.6 L5.0 1 L9 4.6" stroke="#5a5a5a" stroke-width="1.0" fill="none"/></svg>
<svg class="a" style="left:1064.0px;top:389.7px;" width="10" height="5.6" viewBox="0 0 10 5.6"><path d="M1 1 L5.0 4.6 L9 1" stroke="#5a5a5a" stroke-width="1.0" fill="none"/></svg>
<div class="a" style="left:1121px;top:379px;width:1px;height:18px;background:#424242"></div>
<svg class="a" style="left:1125.5px;top:385.2px;" width="10" height="5.6" viewBox="0 0 10 5.6"><path d="M1 1 L5.0 4.6 L9 1" stroke="#a0a0a0" stroke-width="1.0" fill="none"/></svg>
<div class="t" style="left:1082px;top:383.99px;font-size:11px;color:#dcdcdc;font-weight:normal;font-family:'Liberation Sans', sans-serif;transform:scaleX(0.87);transform-origin:0 0;">Metrics</div>
<div class="a" style="left:1177px;top:378px;width:80px;height:20px;background:#2b2b2b;border:1px solid #424242;border-radius:3px;box-sizing:border-box"></div>
<div class="a" style="left:1195px;top:379px;width:1px;height:18px;background:#424242"></div>
<svg class="a" style="left:1181.0px;top:380.7px;" width="10" height="5.6" viewBox="0 0 10 5.6"><path d="M1 4.6 L5.0 1 L9 4.6" stroke="#a0a0a0" stroke-width="1.0" fill="none"/></svg>
<svg class="a" style="left:1181.0px;top:389.7px;" width="10" height="5.6" viewBox="0 0 10 5.6"><path d="M1 1 L5.0 4.6 L9 1" stroke="#a0a0a0" stroke-width="1.0" fill="none"/></svg>
<div class="a" style="left:1238px;top:379px;width:1px;height:18px;background:#424242"></div>
<svg class="a" style="left:1242.5px;top:385.2px;" width="10" height="5.6" viewBox="0 0 10 5.6"><path d="M1 1 L5.0 4.6 L9 1" stroke="#a0a0a0" stroke-width="1.0" fill="none"/></svg>
<div class="t" style="left:1199px;top:383.99px;font-size:11px;color:#dcdcdc;font-weight:normal;font-family:'Liberation Sans', sans-serif;transform:scaleX(0.96);transform-origin:0 0;">0</div>
<svg class="a" style="left:1037px;top:377px;" width="20" height="20" viewBox="0 0 20 20"><text x="0" y="12" font-family="Liberation Sans" font-size="12" fill="#bdbdbd" letter-spacing="-2">V/A</text><path d="M5 16.5 H14 M7.5 14 L5 16.5 L7.5 19" stroke="#bdbdbd" stroke-width="1.2" fill="none"/></svg>
<svg class="a" style="left:1153px;top:377px;" width="20" height="20" viewBox="0 0 20 20"><rect x="0" y="0" width="18" height="12" fill="#bdbdbd"/><text x="1" y="11" font-family="Liberation Sans" font-weight="bold" font-size="11" fill="#323232" letter-spacing="-1">VA</text><path d="M1 16 H17 M3.5 13.5 L1 16 L3.5 18.5 M14.5 13.5 L17 16 L14.5 18.5" stroke="#bdbdbd" stroke-width="1.2" fill="none"/></svg>
<div class="a" style="left:1060px;top:404px;width:80px;height:20px;background:#2b2b2b;border:1px solid #424242;border-radius:3px;box-sizing:border-box"></div>
<div class="a" style="left:1078px;top:405px;width:1px;height:18px;background:#424242"></div>
<svg class="a" style="left:1064.0px;top:406.7px;" width="10" height="5.6" viewBox="0 0 10 5.6"><path d="M1 4.6 L5.0 1 L9 4.6" stroke="#a0a0a0" stroke-width="1.0" fill="none"/></svg>
<svg class="a" style="left:1064.0px;top:415.7px;" width="10" height="5.6" viewBox="0 0 10 5.6"><path d="M1 1 L5.0 4.6 L9 1" stroke="#a0a0a0" stroke-width="1.0" fill="none"/></svg>
<div class="a" style="left:1121px;top:405px;width:1px;height:18px;background:#424242"></div>
<svg class="a" style="left:1125.5px;top:411.2px;" width="10" height="5.6" viewBox="0 0 10 5.6"><path d="M1 1 L5.0 4.6 L9 1" stroke="#a0a0a0" stroke-width="1.0" fill="none"/></svg>
<div class="t" style="left:1082px;top:409.99px;font-size:11px;color:#dcdcdc;font-weight:normal;font-family:'Liberation Sans', sans-serif;transform:scaleX(0.96);transform-origin:0 0;">100%</div>
<div class="a" style="left:1177px;top:404px;width:80px;height:20px;background:#2b2b2b;border:1px solid #424242;border-radius:3px;box-sizing:border-box"></div>
<div class="a" style="left:1195px;top:405px;width:1px;height:18px;background:#424242"></div>
<svg class="a" style="left:1181.0px;top:406.7px;" width="10" height="5.6" viewBox="0 0 10 5.6"><path d="M1 4.6 L5.0 1 L9 4.6" stroke="#a0a0a0" stroke-width="1.0" fill="none"/></svg>
<svg class="a" style="left:1181.0px;top:415.7px;" width="10" height="5.6" viewBox="0 0 10 5.6"><path d="M1 1 L5.0 4.6 L9 1" stroke="#a0a0a0" stroke-width="1.0" fill="none"/></svg>
<div class="a" style="left:1238px;top:405px;width:1px;height:18px;background:#424242"></div>
<svg class="a" style="left:1242.5px;top:411.2px;" width="10" height="5.6" viewBox="0 0 10 5.6"><path d="M1 1 L5.0 4.6 L9 1" stroke="#a0a0a0" stroke-width="1.0" fill="none"/></svg>
<div class="t" style="left:1199px;top:409.99px;font-size:11px;color:#dcdcdc;font-weight:normal;font-family:'Liberation Sans', sans-serif;transform:scaleX(0.96);transform-origin:0 0;">100%</div>
<svg class="a" style="left:1037px;top:403px;" width="20" height="20" viewBox="0 0 20 20"><path d="M2.5 3 V17 M0.5 5 L2.5 3 L4.5 5 M0.5 15 L2.5 17 L4.5 15" stroke="#bdbdbd" stroke-width="1.2" fill="none"/><text x="5" y="17" font-family="Liberation Serif" font-weight="bold" font-size="18" fill="#bdbdbd">T</text></svg>
<svg class="a" style="left:1153px;top:402px;" width="20" height="22" viewBox="0 0 20 22"><text x="2" y="14" font-family="Liberation Serif" font-weight="bold" font-size="17" fill="#bdbdbd">T</text><path d="M1 18.5 H17 M3.5 16 L1 18.5 L3.5 21 M14.5 16 L17 18.5 L14.5 21" stroke="#bdbdbd" stroke-width="1.2" fill="none"/></svg>
<div class="a" style="left:1060px;top:430px;width:80px;height:20px;background:#2b2b2b;border:1px solid #424242;border-radius:3px;box-sizing:border-box"></div>
<div class="a" style="left:1078px;top:431px;width:1px;height:18px;background:#424242"></div>
<svg class="a" style="left:1064.0px;top:432.7px;" width="10" height="5.6" viewBox="0 0 10 5.6"><path d="M1 4.6 L5.0 1 L9 4.6" stroke="#a0a0a0" stroke-width="1.0" fill="none"/></svg>
<svg class="a" style="left:1064.0px;top:441.7px;" width="10" height="5.6" viewBox="0 0 10 5.6"><path d="M1 1 L5.0 4.6 L9 1" stroke="#a0a0a0" stroke-width="1.0" fill="none"/></svg>
<div class="t" style="left:1082px;top:435.99px;font-size:11px;color:#dcdcdc;font-weight:normal;font-family:'Liberation Sans', sans-serif;transform:scaleX(0.96);transform-origin:0 0;">0 pt</div>
<div class="a" style="left:1177px;top:430px;width:80px;height:20px;background:#2b2b2b;border:1px solid #424242;border-radius:3px;box-sizing:border-box"></div>
<div class="a" style="left:1195px;top:431px;width:1px;height:18px;background:#424242"></div>
<svg class="a" style="left:1181.0px;top:432.7px;" width="10" height="5.6" viewBox="0 0 10 5.6"><path d="M1 4.6 L5.0 1 L9 4.6" stroke="#a0a0a0" stroke-width="1.0" fill="none"/></svg>
<svg class="a" style="left:1181.0px;top:441.7px;" width="10" height="5.6" viewBox="0 0 10 5.6"><path d="M1 1 L5.0 4.6 L9 1" stroke="#a0a0a0" stroke-width="1.0" fill="none"/></svg>
<div class="t" style="left:1199px;top:435.99px;font-size:11px;color:#dcdcdc;font-weight:normal;font-family:'Liberation Sans', sans-serif;transform:scaleX(0.96);transform-origin:0 0;">0°</div>
<svg class="a" style="left:1037px;top:430px;" width="20" height="20" viewBox="0 0 20 20"><text x="0" y="13" font-family="Liberation Sans" font-size="13" fill="#bdbdbd">A</text><text x="9" y="8" font-family="Liberation Sans" font-size="8" fill="#bdbdbd">a</text><path d="M0 14.5 H9 M9 9.5 H16 M12.5 19 V12 M10.5 14 L12.5 12 L14.5 14" stroke="#bdbdbd" stroke-width="1" fill="none"/></svg>
<svg class="a" style="left:1153px;top:430px;" width="20" height="20" viewBox="0 0 20 20"><text x="1" y="17" font-family="Liberation Serif" font-style="italic" font-size="20" fill="#bdbdbd">T</text></svg>
<div class="a" style="left:1037px;top:460px;width:103px;height:20px;background:#2b2b2b;border:1px solid #424242;border-radius:3px;box-sizing:border-box"></div>
<div class="a" style="left:1122px;top:461px;width:1px;height:18px;background:#424242"></div>
<svg class="a" style="left:1126.0px;top:467.2px;" width="10" height="5.6" viewBox="0 0 10 5.6"><path d="M1 1 L5.0 4.6 L9 1" stroke="#a0a0a0" stroke-width="1.0" fill="none"/></svg>
<div class="t" style="left:1041px;top:465.99px;font-size:11px;color:#dcdcdc;font-weight:normal;font-family:'Liberation Sans', sans-serif;transform:scaleX(0.86);transform-origin:0 0;">English: USA</div>
<div class="a" style="left:1154px;top:460px;width:103px;height:20px;background:#2b2b2b;border:1px solid #424242;border-radius:3px;box-sizing:border-box"></div>
<div class="t" style="left:1181px;top:465.19px;font-size:11px;color:#c8c8c8;font-weight:normal;font-family:'Liberation Sans', sans-serif;transform:scaleX(0.917);transform-origin:0 0;">OpenType</div>
<div class="a" style="left:1037px;top:491px;width:224px;height:1px;background:#2a2a2a"></div>
<svg class="a" style="left:1039px;top:505px;" width="22" height="17" viewBox="0 0 22 17"><text x="0" y="13" font-family="Liberation Serif" font-weight="bold" font-size="14" fill="#bdbdbd">TT</text></svg>
<svg class="a" style="left:1074px;top:505px;" width="22" height="17" viewBox="0 0 22 17"><text x="0" y="13" font-family="Liberation Serif" font-weight="bold" font-size="14" fill="#bdbdbd">T</text><text x="9" y="13" font-family="Liberation Serif" font-weight="bold" font-size="10" fill="#bdbdbd">T</text></svg>
<svg class="a" style="left:1110px;top:505px;" width="22" height="17" viewBox="0 0 22 17"><text x="0" y="13" font-family="Liberation Sans" font-weight="bold" font-size="14" fill="#bdbdbd">tt</text></svg>
<svg class="a" style="left:1143px;top:505px;" width="22" height="17" viewBox="0 0 22 17"><text x="0" y="13" font-family="Liberation Serif" font-weight="bold" font-size="14" fill="#bdbdbd">T</text><text x="10" y="6" font-family="Liberation Sans" font-size="7" fill="#bdbdbd">1</text></svg>
<svg class="a" style="left:1177px;top:505px;" width="22" height="17" viewBox="0 0 22 17"><text x="0" y="13" font-family="Liberation Serif" font-weight="bold" font-size="14" fill="#bdbdbd">T</text><text x="10" y="14" font-family="Liberation Sans" font-size="7" fill="#bdbdbd">1</text></svg>
<svg class="a" style="left:1213px;top:505px;" width="22" height="17" viewBox="0 0 22 17"><text x="0" y="12" font-family="Liberation Serif" font-weight="bold" font-size="14" fill="#bdbdbd">T</text><path d="M0 15 H12" stroke="#bdbdbd" stroke-width="1"/></svg>
<svg class="a" style="left:1247px;top:505px;" width="22" height="17" viewBox="0 0 22 17"><text x="0" y="13" font-family="Liberation Serif" font-weight="bold" font-size="14" fill="#bdbdbd">T</text><path d="M0.5 7.5 H11.5" stroke="#bdbdbd" stroke-width="1"/></svg>
<div class="a" style="left:1243px;top:531px;width:21px;height:20px;background:#1f1f1f;border-radius:3px"></div>
<div class="a" style="left:1246.0px;top:539.5px;width:3px;height:3px;background:#e0e0e0;border-radius:50%"></div>
<div class="a" style="left:1251.5px;top:539.5px;width:3px;height:3px;background:#e0e0e0;border-radius:50%"></div>
<div class="a" style="left:1257.0px;top:539.5px;width:3px;height:3px;background:#e0e0e0;border-radius:50%"></div>
<div class="a" style="left:1027px;top:555px;width:239px;height:1px;background:#2a2a2a"></div>
<div class="t" style="left:1037px;top:568.19px;font-size:11px;color:#d8d8d8;font-weight:normal;font-family:'Liberation Sans', sans-serif;transform:scaleX(0.87);transform-origin:0 0;">Paragraph</div>
<div class="a" style="left:1037px;top:589px;width:23px;height:22px;background:#1f1f1f;border-radius:3px"></div>
<svg class="a" style="left:1041px;top:594px;" width="16" height="15" viewBox="0 0 16 15"><g><rect x="0" y="0" width="12" height="1.1" fill="#c8c8c8"/><rect x="0" y="3" width="15" height="1.1" fill="#c8c8c8"/><rect x="0" y="6" width="12" height="1.1" fill="#c8c8c8"/><rect x="0" y="9" width="15" height="1.1" fill="#c8c8c8"/><rect x="0" y="12" width="12" height="1.1" fill="#c8c8c8"/></g></svg>
<svg class="a" style="left:1065px;top:594px;" width="16" height="15" viewBox="0 0 16 15"><g><rect x="2" y="0" width="11" height="1.1" fill="#c8c8c8"/><rect x="0" y="3" width="15" height="1.1" fill="#c8c8c8"/><rect x="2" y="6" width="11" height="1.1" fill="#c8c8c8"/><rect x="0" y="9" width="15" height="1.1" fill="#c8c8c8"/><rect x="2" y="12" width="11" height="1.1" fill="#c8c8c8"/></g></svg>
<svg class="a" style="left:1089px;top:594px;" width="16" height="15" viewBox="0 0 16 15"><g><rect x="3" y="0" width="12" height="1.1" fill="#c8c8c8"/><rect x="0" y="3" width="15" height="1.1" fill="#c8c8c8"/><rect x="3" y="6" width="12" height="1.1" fill="#c8c8c8"/><rect x="0" y="9" width="15" height="1.1" fill="#c8c8c8"/><rect x="3" y="12" width="12" height="1.1" fill="#c8c8c8"/></g></svg>
<svg class="a" style="left:1115px;top:594px;" width="16" height="15" viewBox="0 0 16 15"><g><rect x="0" y="0" width="15" height="1.1" fill="#c8c8c8"/><rect x="0" y="3" width="15" height="1.1" fill="#c8c8c8"/><rect x="0" y="6" width="15" height="1.1" fill="#c8c8c8"/><rect x="0" y="9" width="15" height="1.1" fill="#c8c8c8"/><rect x="0" y="12" width="10" height="1.1" fill="#c8c8c8"/></g></svg>
<svg class="a" style="left:1139px;top:594px;" width="16" height="15" viewBox="0 0 16 15"><g><rect x="0" y="0" width="15" height="1.1" fill="#c8c8c8"/><rect x="0" y="3" width="15" height="1.1" fill="#c8c8c8"/><rect x="0" y="6" width="15" height="1.1" fill="#c8c8c8"/><rect x="0" y="9" width="15" height="1.1" fill="#c8c8c8"/><rect x="2.5" y="12" width="10.0" height="1.1" fill="#c8c8c8"/></g></svg>
<svg class="a" style="left:1163px;top:594px;" width="16" height="15" viewBox="0 0 16 15"><g><rect x="0" y="0" width="15" height="1.1" fill="#c8c8c8"/><rect x="0" y="3" width="15" height="1.1" fill="#c8c8c8"/><rect x="0" y="6" width="15" height="1.1" fill="#c8c8c8"/><rect x="0" y="9" width="15" height="1.1" fill="#c8c8c8"/><rect x="5" y="12" width="10" height="1.1" fill="#c8c8c8"/></g></svg>
<svg class="a" style="left:1187px;top:594px;" width="16" height="15" viewBox="0 0 16 15"><g><rect x="0" y="0" width="15" height="1.1" fill="#c8c8c8"/><rect x="0" y="3" width="15" height="1.1" fill="#c8c8c8"/><rect x="0" y="6" width="15" height="1.1" fill="#c8c8c8"/><rect x="0" y="9" width="15" height="1.1" fill="#c8c8c8"/><rect x="0" y="12" width="15" height="1.1" fill="#c8c8c8"/></g></svg>
<svg class="a" style="left:1213px;top:594px;" width="16" height="15" viewBox="0 0 16 15"><g><rect x="3" y="0" width="8" height="1.1" fill="#c8c8c8"/><rect x="0" y="3" width="11" height="1.1" fill="#c8c8c8"/><rect x="3" y="6" width="8" height="1.1" fill="#c8c8c8"/><rect x="0" y="9" width="11" height="1.1" fill="#c8c8c8"/><rect x="3" y="12" width="8" height="1.1" fill="#c8c8c8"/><rect x="14" y="-1" width="1.2" height="15" fill="#c8c8c8"/></g></svg>
<svg class="a" style="left:1238px;top:594px;" width="16" height="15" viewBox="0 0 16 15"><g><rect x="0" y="0" width="11" height="1.1" fill="#c8c8c8"/><rect x="0" y="3" width="11" height="1.1" fill="#c8c8c8"/><rect x="0" y="6" width="8" height="1.1" fill="#c8c8c8"/><rect x="0" y="9" width="11" height="1.1" fill="#c8c8c8"/><rect x="0" y="12" width="8" height="1.1" fill="#c8c8c8"/><rect x="14" y="-1" width="1.2" height="15" fill="#c8c8c8"/></g></svg>
<div class="a" style="left:1037px;top:617px;width:224px;height:1px;background:#2c2c2c"></div>
<svg class="a" style="left:1040px;top:625px;" width="18" height="16" viewBox="0 0 18 16"><path d="M0 6.5 H6 M4 4.5 L6 6.5 L4 8.5" stroke="#bdbdbd" stroke-width="1.2" fill="none"/><path d="M8 1 V14" stroke="#bdbdbd" stroke-width="1"/><path d="M10 2 H17 M10 5 H17 M10 8 H17 M10 11 H17 M10 14 H17" stroke="#bdbdbd" stroke-width="1.2"/></svg>
<div class="a" style="left:1062px;top:623px;width:79px;height:20px;background:#2b2b2b;border:1px solid #424242;border-radius:3px;box-sizing:border-box"></div>
<div class="a" style="left:1080px;top:624px;width:1px;height:18px;background:#424242"></div>
<svg class="a" style="left:1066.0px;top:625.7px;" width="10" height="5.6" viewBox="0 0 10 5.6"><path d="M1 4.6 L5.0 1 L9 4.6" stroke="#a0a0a0" stroke-width="1.0" fill="none"/></svg>
<svg class="a" style="left:1066.0px;top:634.7px;" width="10" height="5.6" viewBox="0 0 10 5.6"><path d="M1 1 L5.0 4.6 L9 1" stroke="#a0a0a0" stroke-width="1.0" fill="none"/></svg>
<div class="t" style="left:1084px;top:628.99px;font-size:11px;color:#dcdcdc;font-weight:normal;font-family:'Liberation Sans', sans-serif;transform:scaleX(0.96);transform-origin:0 0;">0 in</div>
<svg class="a" style="left:1155px;top:625px;" width="18" height="16" viewBox="0 0 18 16"><path d="M0 2 H7 M0 5 H7 M0 8 H7 M0 11 H7 M0 14 H7" stroke="#bdbdbd" stroke-width="1.2"/><path d="M9 1 V14" stroke="#bdbdbd" stroke-width="1"/><path d="M17 6.5 H11 M13 4.5 L11 6.5 L13 8.5" stroke="#bdbdbd" stroke-width="1.2" fill="none"/></svg>
<div class="a" style="left:1177px;top:623px;width:80px;height:20px;background:#2b2b2b;border:1px solid #424242;border-radius:3px;box-sizing:border-box"></div>
<div class="a" style="left:1195px;top:624px;width:1px;height:18px;background:#424242"></div>
<svg class="a" style="left:1181.0px;top:625.7px;" width="10" height="5.6" viewBox="0 0 10 5.6"><path d="M1 4.6 L5.0 1 L9 4.6" stroke="#a0a0a0" stroke-width="1.0" fill="none"/></svg>
<svg class="a" style="left:1181.0px;top:634.7px;" width="10" height="5.6" viewBox="0 0 10 5.6"><path d="M1 1 L5.0 4.6 L9 1" stroke="#a0a0a0" stroke-width="1.0" fill="none"/></svg>
<div class="t" style="left:1199px;top:628.99px;font-size:11px;color:#dcdcdc;font-weight:normal;font-family:'Liberation Sans', sans-serif;transform:scaleX(0.96);transform-origin:0 0;">0 in</div>
<svg class="a" style="left:1040px;top:651px;" width="18" height="16" viewBox="0 0 18 16"><path d="M0 2 H5 M3 0 L5 2 L3 4" stroke="#bdbdbd" stroke-width="1.2" fill="none"/><path d="M7 3 H17 M5 6.5 H17 M5 10 H17 M5 13.5 H17" stroke="#bdbdbd" stroke-width="1.2"/></svg>
<div class="a" style="left:1062px;top:649px;width:79px;height:21px;background:#2b2b2b;border:1px solid #424242;border-radius:3px;box-sizing:border-box"></div>
<div class="a" style="left:1080px;top:650px;width:1px;height:19px;background:#424242"></div>
<svg class="a" style="left:1066.0px;top:652.2px;" width="10" height="5.6" viewBox="0 0 10 5.6"><path d="M1 4.6 L5.0 1 L9 4.6" stroke="#a0a0a0" stroke-width="1.0" fill="none"/></svg>
<svg class="a" style="left:1066.0px;top:661.2px;" width="10" height="5.6" viewBox="0 0 10 5.6"><path d="M1 1 L5.0 4.6 L9 1" stroke="#a0a0a0" stroke-width="1.0" fill="none"/></svg>
<div class="t" style="left:1084px;top:655.49px;font-size:11px;color:#dcdcdc;font-weight:normal;font-family:'Liberation Sans', sans-serif;transform:scaleX(0.96);transform-origin:0 0;">0 in</div>
<svg class="a" style="left:1155px;top:651px;" width="18" height="16" viewBox="0 0 18 16"><path d="M0 2 H12 M0 5.5 H12 M0 9 H12 M0 12.5 H8" stroke="#bdbdbd" stroke-width="1.2"/><path d="M17 13 H11 M13 11 L11 13 L13 15" stroke="#bdbdbd" stroke-width="1.2" fill="none"/></svg>
<div class="a" style="left:1177px;top:649px;width:80px;height:21px;background:#2b2b2b;border:1px solid #424242;border-radius:3px;box-sizing:border-box"></div>
<div class="a" style="left:1195px;top:650px;width:1px;height:19px;background:#424242"></div>
<svg class="a" style="left:1181.0px;top:652.2px;" width="10" height="5.6" viewBox="0 0 10 5.6"><path d="M1 4.6 L5.0 1 L9 4.6" stroke="#a0a0a0" stroke-width="1.0" fill="none"/></svg>
<svg class="a" style="left:1181.0px;top:661.2px;" width="10" height="5.6" viewBox="0 0 10 5.6"><path d="M1 1 L5.0 4.6 L9 1" stroke="#a0a0a0" stroke-width="1.0" fill="none"/></svg>
<div class="t" style="left:1199px;top:655.49px;font-size:11px;color:#dcdcdc;font-weight:normal;font-family:'Liberation Sans', sans-serif;transform:scaleX(0.96);transform-origin:0 0;">0 in</div>
<svg class="a" style="left:1040px;top:677px;" width="18" height="16" viewBox="0 0 18 16"><path d="M0 3 H5 M3 1 L5 3 L3 5" stroke="#bdbdbd" stroke-width="1.2" fill="none"/><rect x="6" y="1" width="10" height="5" stroke="#bdbdbd" stroke-width="1.2" fill="none"/><path d="M6 10 H16 M6 13.5 H16" stroke="#bdbdbd" stroke-width="1.2"/></svg>
<div class="a" style="left:1062px;top:675px;width:79px;height:20px;background:#2b2b2b;border:1px solid #424242;border-radius:3px;box-sizing:border-box"></div>
<div class="a" style="left:1080px;top:676px;width:1px;height:18px;background:#424242"></div>
<svg class="a" style="left:1066.0px;top:677.7px;" width="10" height="5.6" viewBox="0 0 10 5.6"><path d="M1 4.6 L5.0 1 L9 4.6" stroke="#a0a0a0" stroke-width="1.0" fill="none"/></svg>
<svg class="a" style="left:1066.0px;top:686.7px;" width="10" height="5.6" viewBox="0 0 10 5.6"><path d="M1 1 L5.0 4.6 L9 1" stroke="#a0a0a0" stroke-width="1.0" fill="none"/></svg>
<div class="t" style="left:1084px;top:680.99px;font-size:11px;color:#dcdcdc;font-weight:normal;font-family:'Liberation Sans', sans-serif;transform:scaleX(0.96);transform-origin:0 0;">0 in</div>
<svg class="a" style="left:1155px;top:677px;" width="18" height="16" viewBox="0 0 18 16"><path d="M0 12 H5 M3 10 L5 12 L3 14" stroke="#bdbdbd" stroke-width="1.2" fill="none"/><path d="M6 1.5 H16 M6 5 H16" stroke="#bdbdbd" stroke-width="1.2"/><rect x="6" y="9" width="10" height="5" stroke="#bdbdbd" stroke-width="1.2" fill="none"/></svg>
<div class="a" style="left:1177px;top:675px;width:80px;height:20px;background:#2b2b2b;border:1px solid #424242;border-radius:3px;box-sizing:border-box"></div>
<div class="a" style="left:1195px;top:676px;width:1px;height:18px;background:#424242"></div>
<svg class="a" style="left:1181.0px;top:677.7px;" width="10" height="5.6" viewBox="0 0 10 5.6"><path d="M1 4.6 L5.0 1 L9 4.6" stroke="#a0a0a0" stroke-width="1.0" fill="none"/></svg>
<svg class="a" style="left:1181.0px;top:686.7px;" width="10" height="5.6" viewBox="0 0 10 5.6"><path d="M1 1 L5.0 4.6 L9 1" stroke="#a0a0a0" stroke-width="1.0" fill="none"/></svg>
<div class="t" style="left:1199px;top:680.99px;font-size:11px;color:#dcdcdc;font-weight:normal;font-family:'Liberation Sans', sans-serif;transform:scaleX(0.96);transform-origin:0 0;">0 in</div>
<svg class="a" style="left:1040px;top:703px;" width="18" height="16" viewBox="0 0 18 16"><path d="M0 9 H5 M3 7 L5 9 L3 11" stroke="#bdbdbd" stroke-width="1.2" fill="none"/><path d="M6 1.5 H16 M6 4.5 H16" stroke="#bdbdbd" stroke-width="1.2"/><rect x="6" y="7" width="10" height="5" stroke="#bdbdbd" stroke-width="1.2" fill="none"/><path d="M6 14.5 H16" stroke="#bdbdbd" stroke-width="1.2"/></svg>
<div class="a" style="left:1062px;top:701px;width:79px;height:21px;background:#2b2b2b;border:1px solid #424242;border-radius:3px;box-sizing:border-box"></div>
<div class="a" style="left:1063px;top:702px;width:17px;height:19px;background:#383838"></div>
<div class="a" style="left:1080px;top:702px;width:1px;height:19px;background:#424242"></div>
<svg class="a" style="left:1066.0px;top:704.2px;" width="10" height="5.6" viewBox="0 0 10 5.6"><path d="M1 4.6 L5.0 1 L9 4.6" stroke="#5a5a5a" stroke-width="1.0" fill="none"/></svg>
<svg class="a" style="left:1066.0px;top:713.2px;" width="10" height="5.6" viewBox="0 0 10 5.6"><path d="M1 1 L5.0 4.6 L9 1" stroke="#5a5a5a" stroke-width="1.0" fill="none"/></svg>
<div class="a" style="left:1122px;top:702px;width:1px;height:19px;background:#424242"></div>
<svg class="a" style="left:1126.5px;top:708.7px;" width="10" height="5.6" viewBox="0 0 10 5.6"><path d="M1 1 L5.0 4.6 L9 1" stroke="#a0a0a0" stroke-width="1.0" fill="none"/></svg>
<div class="t" style="left:1084px;top:707.49px;font-size:11px;color:#dcdcdc;font-weight:normal;font-family:'Liberation Sans', sans-serif;transform:scaleX(0.87);transform-origin:0 0;">Ignore</div>
<div class="t" style="left:1229px;top:698.30px;font-size:13px;color:#ababab;font-weight:bold;font-family:'Liberation Sans', sans-serif;letter-spacing:0px">udemy</div>
<svg class="a" style="left:1229px;top:696px;" width="8" height="5" viewBox="0 0 8 5"><path d="M0.8 4.2 L3.8 1 L6.8 4.2" stroke="#ababab" stroke-width="1.5" fill="none"/></svg>
<svg class="a" style="left:372px;top:23px;" width="16" height="23" viewBox="0 0 16 23"><path d="M1 1 L1 18 L5.2 14.2 L8.5 21.5 L11.5 20.2 L8.3 13.2 L13.6 13 Z" fill="#ffffff" stroke="#000" stroke-width="1.1" stroke-linejoin="round"/></svg>
</body></html>
